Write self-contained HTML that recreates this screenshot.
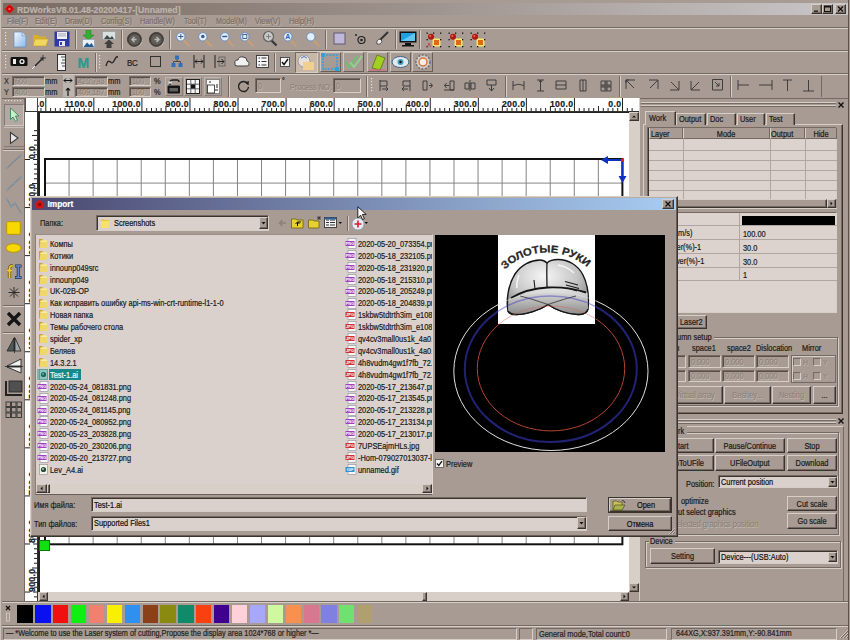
<!DOCTYPE html><html><head><meta charset="utf-8"><style>
html,body{margin:0;padding:0;width:850px;height:640px;overflow:hidden;background:#a89b93;font-family:"Liberation Sans", sans-serif;}
.a{position:absolute;}
.t{height:20px;line-height:20px;white-space:nowrap;-webkit-text-stroke:0.2px currentColor;}
</style></head><body>
<div class="a" style="left:0px;top:0px;width:1px;height:640px;background:#c9c0b8"></div>
<div class="a" style="left:848px;top:0px;width:1px;height:640px;background:#5c524c"></div>
<div class="a" style="left:3px;top:3px;width:845px;height:12px;background:linear-gradient(90deg,#786b63 0%,#9a8f89 45%,#c9c6c8 100%)"></div>
<svg class="a" style="left:4px;top:4px;" width="11" height="10" viewBox="0 0 11 10"><path d="M5.5 0.3 L10.5 5 L5.5 9.7 L0.5 5 Z" fill="#e01818"/><circle cx="5.5" cy="5" r="3" fill="#d00000"/><circle cx="5.5" cy="5" r="1.2" fill="#ff6060"/></svg>
<div class="a t" style="left:17px;top:-0.5px;font-size:8.7px;color:#bdb3ab;font-weight:bold;">RDWorksV8.01.48-20200417-[Unnamed]</div>
<div class="a" style="left:811px;top:4px;width:11px;height:10px;background:#a89b93;border-top:1px solid #d6cfc8;border-left:1px solid #d6cfc8;border-right:1px solid #3a332e;border-bottom:1px solid #3a332e;box-shadow:inset -1px -1px #756a63;box-sizing:border-box;"></div>
<div class="a" style="left:822px;top:4px;width:11px;height:10px;background:#a89b93;border-top:1px solid #d6cfc8;border-left:1px solid #d6cfc8;border-right:1px solid #3a332e;border-bottom:1px solid #3a332e;box-shadow:inset -1px -1px #756a63;box-sizing:border-box;"></div>
<div class="a" style="left:835px;top:4px;width:11px;height:10px;background:#a89b93;border-top:1px solid #d6cfc8;border-left:1px solid #d6cfc8;border-right:1px solid #3a332e;border-bottom:1px solid #3a332e;box-shadow:inset -1px -1px #756a63;box-sizing:border-box;"></div>
<svg class="a" style="left:811px;top:4px;" width="11" height="10" viewBox="0 0 11 10"><rect x="3" y="6.5" width="4" height="1.3" fill="#111"/></svg>
<svg class="a" style="left:822px;top:4px;" width="11" height="10" viewBox="0 0 11 10"><rect x="2.5" y="2" width="6" height="5.5" fill="none" stroke="#111" stroke-width="1"/><rect x="2.5" y="2" width="6" height="1.5" fill="#111"/></svg>
<svg class="a" style="left:835px;top:4px;" width="11" height="10" viewBox="0 0 11 10"><path d="M3 2.5 L8 7.5 M8 2.5 L3 7.5" stroke="#111" stroke-width="1.4"/></svg>
<div class="a t" style="left:7.4px;top:11.8px;font-size:8.18px;color:#7a6e66;transform:scaleX(0.893);transform-origin:0 50%;text-shadow:0.6px 0.6px 0 #c4bbb4">File(F)</div>
<div class="a t" style="left:35px;top:11.8px;font-size:8.18px;color:#7a6e66;transform:scaleX(0.893);transform-origin:0 50%;text-shadow:0.6px 0.6px 0 #c4bbb4">Edit(E)</div>
<div class="a t" style="left:64.6px;top:11.8px;font-size:8.18px;color:#7a6e66;transform:scaleX(0.893);transform-origin:0 50%;text-shadow:0.6px 0.6px 0 #c4bbb4">Draw(D)</div>
<div class="a t" style="left:100.6px;top:11.8px;font-size:8.18px;color:#7a6e66;transform:scaleX(0.893);transform-origin:0 50%;text-shadow:0.6px 0.6px 0 #c4bbb4">Config(S)</div>
<div class="a t" style="left:139.8px;top:11.8px;font-size:8.18px;color:#7a6e66;transform:scaleX(0.893);transform-origin:0 50%;text-shadow:0.6px 0.6px 0 #c4bbb4">Handle(W)</div>
<div class="a t" style="left:183.8px;top:11.8px;font-size:8.18px;color:#7a6e66;transform:scaleX(0.893);transform-origin:0 50%;text-shadow:0.6px 0.6px 0 #c4bbb4">Tool(T)</div>
<div class="a t" style="left:215.5px;top:11.8px;font-size:8.18px;color:#7a6e66;transform:scaleX(0.893);transform-origin:0 50%;text-shadow:0.6px 0.6px 0 #c4bbb4">Model(M)</div>
<div class="a t" style="left:254.7px;top:11.8px;font-size:8.18px;color:#7a6e66;transform:scaleX(0.893);transform-origin:0 50%;text-shadow:0.6px 0.6px 0 #c4bbb4">View(V)</div>
<div class="a t" style="left:288.6px;top:11.8px;font-size:8.18px;color:#7a6e66;transform:scaleX(0.893);transform-origin:0 50%;text-shadow:0.6px 0.6px 0 #c4bbb4">Help(H)</div>
<div class="a" style="left:2px;top:27px;width:846px;height:1px;background:#756a63"></div>
<div class="a" style="left:2px;top:28px;width:846px;height:1px;background:#d6cfc8"></div>
<div class="a" style="left:2px;top:50px;width:846px;height:1px;background:#756a63"></div>
<div class="a" style="left:2px;top:51px;width:846px;height:1px;background:#d6cfc8"></div>
<svg class="a" style="left:5px;top:32px;" width="2" height="16" viewBox="0 0 2 16"><rect x="0" y="0" width="1.2" height="1.2" fill="#e8e2dc"/><rect x="0" y="3" width="1.2" height="1.2" fill="#e8e2dc"/><rect x="0" y="6" width="1.2" height="1.2" fill="#e8e2dc"/><rect x="0" y="9" width="1.2" height="1.2" fill="#e8e2dc"/><rect x="0" y="12" width="1.2" height="1.2" fill="#e8e2dc"/></svg>
<div class="a" style="left:75px;top:30px;width:1px;height:19px;background:#756a63"></div>
<div class="a" style="left:76px;top:30px;width:1px;height:19px;background:#d6cfc8"></div>
<div class="a" style="left:121px;top:30px;width:1px;height:19px;background:#756a63"></div>
<div class="a" style="left:122px;top:30px;width:1px;height:19px;background:#d6cfc8"></div>
<div class="a" style="left:169px;top:30px;width:1px;height:19px;background:#756a63"></div>
<div class="a" style="left:170px;top:30px;width:1px;height:19px;background:#d6cfc8"></div>
<div class="a" style="left:325px;top:30px;width:1px;height:19px;background:#756a63"></div>
<div class="a" style="left:326px;top:30px;width:1px;height:19px;background:#d6cfc8"></div>
<div class="a" style="left:395px;top:30px;width:1px;height:19px;background:#756a63"></div>
<div class="a" style="left:396px;top:30px;width:1px;height:19px;background:#d6cfc8"></div>
<div class="a" style="left:419px;top:30px;width:1px;height:19px;background:#756a63"></div>
<div class="a" style="left:420px;top:30px;width:1px;height:19px;background:#d6cfc8"></div>
<svg class="a" style="left:13px;top:31px;" width="14" height="17" viewBox="0 0 14 17"><defs><linearGradient id="gd" x1="0" y1="0" x2="1" y2="1"><stop offset="0" stop-color="#f4f8ff"/><stop offset="1" stop-color="#8ab8e8"/></linearGradient></defs><path d="M1 1 H9 L13 5 V16 H1 Z" fill="url(#gd)" stroke="#6a90c0" stroke-width="0.8"/><path d="M9 1 V5 H13" fill="#c8dcf0" stroke="#6a90c0" stroke-width="0.6"/></svg>
<svg class="a" style="left:32px;top:32px;" width="17" height="15" viewBox="0 0 17 15"><path d="M1 3 H6 L7.5 4.5 H14 V14 H1 Z" fill="#d8b030"/><path d="M3 7 H16.5 L14 14 H1 Z" fill="#f0d860" stroke="#c09828" stroke-width="0.6"/></svg>
<svg class="a" style="left:54px;top:31px;" width="16" height="16" viewBox="0 0 16 16"><rect x="0.5" y="0.5" width="15" height="15" fill="#3038a8"/><rect x="3" y="1" width="10" height="7" fill="#f0f0f8"/><rect x="4" y="2.5" width="8" height="0.8" fill="#9090b0"/><rect x="4" y="4.5" width="8" height="0.8" fill="#9090b0"/><rect x="5" y="10" width="6" height="5" fill="#e8e8f0"/><rect x="6" y="11" width="2" height="3" fill="#3038a8"/></svg>
<svg class="a" style="left:82px;top:30px;" width="13" height="18" viewBox="0 0 13 18"><path d="M4 0 H9 V5 H12 L6.5 10 L1 5 H4 Z" fill="#30b030" stroke="#208020" stroke-width="0.5"/><rect x="0.5" y="9.5" width="12" height="8" fill="#e8f0f8" stroke="#8a9ab0" stroke-width="0.6"/><path d="M1.5 17 L5 12.5 L7.5 15 L9.5 13 L12 17 Z" fill="#2a5a90"/></svg>
<svg class="a" style="left:102px;top:31px;" width="14" height="17" viewBox="0 0 14 17"><rect x="0.5" y="0.5" width="13" height="8" fill="#d8e0e0" stroke="#8a9a9a" stroke-width="0.6"/><path d="M2 8 L5 4 L8 7 L10 5 L12 8 Z" fill="#404848"/><path d="M4.5 17 V13 H2 L7 8.5 L12 13 H9.5 V17 Z" fill="#404040"/></svg>
<svg class="a" style="left:127.0px;top:32px;" width="17" height="17" viewBox="0 0 17 17"><circle cx="8" cy="8" r="7.2" fill="#f0ece8"/><circle cx="7.5" cy="7.5" r="7" fill="#4a4542" stroke="#2a2520" stroke-width="0.8"/><circle cx="7.5" cy="7.5" r="5.3" fill="#625e5a"/><path d="M9.5 7.5 H5.5 M7.5 5 L5 7.5 L7.5 10" stroke="#b8b8b8" stroke-width="1.5" fill="none"/></svg>
<svg class="a" style="left:149.0px;top:32px;" width="17" height="17" viewBox="0 0 17 17"><circle cx="8" cy="8" r="7.2" fill="#f0ece8"/><circle cx="7.5" cy="7.5" r="7" fill="#4a4542" stroke="#2a2520" stroke-width="0.8"/><circle cx="7.5" cy="7.5" r="5.3" fill="#625e5a"/><path d="M5.5 7.5 H9.5 M7.5 5 L10 7.5 L7.5 10" stroke="#b8b8b8" stroke-width="1.5" fill="none"/></svg>
<svg class="a" style="left:176px;top:31px;" width="16" height="17" viewBox="0 0 16 17"><path d="M7 8.5 L13.5 15.5" stroke="#d0a070" stroke-width="2.2" opacity="0.75"/><circle cx="4.8" cy="5.8" r="4.2" fill="#e4eef8" stroke="#6088c0" stroke-width="0.9"/><g transform="translate(-1.7,-1)"><path d="M4 6.5 H9 M6.5 4 V9" stroke="#3a5a90" stroke-width="1"/></g></svg>
<svg class="a" style="left:197.7px;top:31px;" width="16" height="17" viewBox="0 0 16 17"><path d="M7 8.5 L13.5 15.5" stroke="#d0a070" stroke-width="2.2" opacity="0.75"/><circle cx="4.8" cy="5.8" r="4.2" fill="#e4eef8" stroke="#6088c0" stroke-width="0.9"/><g transform="translate(-1.7,-1)"><circle cx="6.5" cy="6.5" r="1.8" fill="#3a5a90"/></g></svg>
<svg class="a" style="left:219.7px;top:31px;" width="16" height="17" viewBox="0 0 16 17"><path d="M7 8.5 L13.5 15.5" stroke="#d0a070" stroke-width="2.2" opacity="0.75"/><circle cx="4.8" cy="5.8" r="4.2" fill="#e4eef8" stroke="#6088c0" stroke-width="0.9"/><g transform="translate(-1.7,-1)"><path d="M4 6.5 H9" stroke="#3a5a90" stroke-width="1.5"/></g></svg>
<svg class="a" style="left:240.4px;top:31px;" width="16" height="17" viewBox="0 0 16 17"><path d="M7 8.5 L13.5 15.5" stroke="#d0a070" stroke-width="2.2" opacity="0.75"/><circle cx="4.8" cy="5.8" r="4.2" fill="#e4eef8" stroke="#6088c0" stroke-width="0.9"/><g transform="translate(-1.7,-1)"><rect x="4.5" y="4.5" width="4" height="4" fill="none" stroke="#3a5a90" stroke-width="0.9"/></g></svg>
<svg class="a" style="left:262px;top:30px;" width="17" height="18" viewBox="0 0 17 18"><path d="M8 9 L14.5 15.5" stroke="#3a3a3a" stroke-width="2.4"/><circle cx="6.5" cy="6.5" r="5" fill="#c8c8c8" stroke="#606060" stroke-width="1.2"/><path d="M4 6.5 H9 M6.5 4 V9" stroke="#707070" stroke-width="0.8"/></svg>
<svg class="a" style="left:283px;top:31px;" width="16" height="17" viewBox="0 0 16 17"><path d="M7 8.5 L13.5 15.5" stroke="#d0a070" stroke-width="2.2" opacity="0.75"/><circle cx="4.8" cy="5.8" r="4.2" fill="#e4eef8" stroke="#6088c0" stroke-width="0.9"/><g transform="translate(-1.7,-1)"><text x="6.5" y="9" font-size="7" text-anchor="middle" fill="#2060c0" font-family="Liberation Sans" font-weight="bold">A</text></g></svg>
<svg class="a" style="left:306px;top:31px;" width="16" height="17" viewBox="0 0 16 17"><path d="M7 8.5 L13.5 15.5" stroke="#d0a070" stroke-width="2.2" opacity="0.75"/><circle cx="4.8" cy="5.8" r="4.2" fill="#e4eef8" stroke="#6088c0" stroke-width="0.9"/><g transform="translate(-1.7,-1)"></g></svg>
<svg class="a" style="left:333px;top:32px;" width="13" height="13" viewBox="0 0 13 13"><rect x="1" y="1" width="11" height="11" fill="#c0b8d8" stroke="#605870" stroke-width="1"/></svg>
<svg class="a" style="left:354px;top:32px;" width="14" height="14" viewBox="0 0 14 14"><circle cx="7.5" cy="8" r="3.5" fill="none" stroke="#222" stroke-width="1.2"/><circle cx="7.5" cy="8" r="1.3" fill="#222"/><circle cx="2" cy="3" r="1" fill="#222"/></svg>
<svg class="a" style="left:375px;top:31px;" width="15" height="15" viewBox="0 0 15 15"><path d="M13 1 L5 9" stroke="#333" stroke-width="2"/><path d="M2 13 Q1 9 5 8 L7 10 Q6 14 2 13 Z" fill="#eee" stroke="#333" stroke-width="0.8"/></svg>
<svg class="a" style="left:399px;top:31px;" width="18" height="16" viewBox="0 0 18 16"><rect x="0.5" y="0.5" width="17" height="11" fill="#111"/><rect x="2" y="2" width="14" height="8" fill="#20a0e0"/><path d="M2 10 L16 2 V10 Z" fill="#60c8f0"/><rect x="6" y="12" width="6" height="2" fill="#111"/><rect x="3" y="14" width="12" height="1.5" fill="#111"/></svg>
<svg class="a" style="left:425.5px;top:32px;" width="16" height="16" viewBox="0 0 16 16"><rect x="6.5" y="6.5" width="8" height="8" rx="1.5" fill="#f8e868"/><rect x="8" y="8" width="5" height="5" fill="#e06818"/><circle cx="5" cy="4.8" r="3" fill="#b01810"/><circle cx="4.3" cy="4" r="1" fill="#f07050"/><rect x="0.5" y="0.5" width="1.3" height="1.3" fill="#111"/><rect x="7" y="0.5" width="1.3" height="1.3" fill="#111"/><rect x="14" y="0.5" width="1.3" height="1.3" fill="#111"/><rect x="0.5" y="7" width="1.3" height="1.3" fill="#111"/><rect x="14" y="7" width="1.3" height="1.3" fill="#111"/><rect x="0.5" y="14" width="1.3" height="1.3" fill="#111"/><rect x="7" y="14" width="1.3" height="1.3" fill="#111"/><rect x="14" y="14" width="1.3" height="1.3" fill="#111"/><path d="M1.5 15 L3 11 L4.5 15" stroke="#d04040" stroke-width="0.9" fill="none"/></svg>
<svg class="a" style="left:447.5px;top:32px;" width="16" height="16" viewBox="0 0 16 16"><rect x="6.5" y="6.5" width="8" height="8" rx="1.5" fill="#f8e868"/><rect x="8" y="8" width="5" height="5" fill="#e06818"/><circle cx="5" cy="4.8" r="3" fill="#b01810"/><circle cx="4.3" cy="4" r="1" fill="#f07050"/><rect x="0.5" y="0.5" width="1.3" height="1.3" fill="#111"/><rect x="7" y="0.5" width="1.3" height="1.3" fill="#111"/><rect x="14" y="0.5" width="1.3" height="1.3" fill="#111"/><rect x="0.5" y="7" width="1.3" height="1.3" fill="#111"/><rect x="14" y="7" width="1.3" height="1.3" fill="#111"/><rect x="0.5" y="14" width="1.3" height="1.3" fill="#111"/><rect x="7" y="14" width="1.3" height="1.3" fill="#111"/><rect x="14" y="14" width="1.3" height="1.3" fill="#111"/></svg>
<svg class="a" style="left:469.5px;top:32px;" width="16" height="16" viewBox="0 0 16 16"><rect x="6.5" y="6.5" width="8" height="8" rx="1.5" fill="#f8e868"/><rect x="8" y="8" width="5" height="5" fill="#e06818"/><circle cx="5" cy="4.8" r="3" fill="#b01810"/><circle cx="4.3" cy="4" r="1" fill="#f07050"/><rect x="0.5" y="0.5" width="1.3" height="1.3" fill="#111"/><rect x="7" y="0.5" width="1.3" height="1.3" fill="#111"/><rect x="14" y="0.5" width="1.3" height="1.3" fill="#111"/><rect x="0.5" y="7" width="1.3" height="1.3" fill="#111"/><rect x="14" y="7" width="1.3" height="1.3" fill="#111"/><rect x="0.5" y="14" width="1.3" height="1.3" fill="#111"/><rect x="7" y="14" width="1.3" height="1.3" fill="#111"/><rect x="14" y="14" width="1.3" height="1.3" fill="#111"/></svg>
<div class="a" style="left:2px;top:73px;width:846px;height:1px;background:#756a63"></div>
<div class="a" style="left:2px;top:74px;width:846px;height:1px;background:#d6cfc8"></div>
<svg class="a" style="left:5px;top:55px;" width="2" height="16" viewBox="0 0 2 16"><rect x="0" y="0" width="1.2" height="1.2" fill="#e8e2dc"/><rect x="0" y="3" width="1.2" height="1.2" fill="#e8e2dc"/><rect x="0" y="6" width="1.2" height="1.2" fill="#e8e2dc"/><rect x="0" y="9" width="1.2" height="1.2" fill="#e8e2dc"/><rect x="0" y="12" width="1.2" height="1.2" fill="#e8e2dc"/></svg>
<div class="a" style="left:95px;top:53px;width:1px;height:19px;background:#756a63"></div>
<div class="a" style="left:96px;top:53px;width:1px;height:19px;background:#d6cfc8"></div>
<svg class="a" style="left:99px;top:55px;" width="2" height="16" viewBox="0 0 2 16"><rect x="0" y="0" width="1.2" height="1.2" fill="#e8e2dc"/><rect x="0" y="3" width="1.2" height="1.2" fill="#e8e2dc"/><rect x="0" y="6" width="1.2" height="1.2" fill="#e8e2dc"/><rect x="0" y="9" width="1.2" height="1.2" fill="#e8e2dc"/><rect x="0" y="12" width="1.2" height="1.2" fill="#e8e2dc"/></svg>
<div class="a" style="left:274px;top:53px;width:1px;height:19px;background:#756a63"></div>
<div class="a" style="left:275px;top:53px;width:1px;height:19px;background:#d6cfc8"></div>
<svg class="a" style="left:10px;top:56px;" width="18" height="11" viewBox="0 0 18 11"><rect x="0.5" y="1" width="17" height="9" rx="1.5" fill="#111"/><rect x="3" y="3" width="3" height="5" fill="#eee"/><circle cx="12" cy="5.5" r="2.6" fill="#eee"/><circle cx="12" cy="5.5" r="1.2" fill="#111"/></svg>
<svg class="a" style="left:31px;top:54px;" width="16" height="17" viewBox="0 0 16 17"><path d="M1 15 L12 4" stroke="#222" stroke-width="1.4"/><path d="M1 15 L4 12" stroke="#f0f0f0" stroke-width="1.2"/><path d="M12 1 V7 M9 4 H15" stroke="#222" stroke-width="0.8"/></svg>
<svg class="a" style="left:57px;top:54px;" width="9" height="17" viewBox="0 0 9 17"><rect x="0.5" y="0.5" width="8" height="16" fill="#f4f4f4" stroke="#222" stroke-width="0.9"/><path d="M4 3 H8 M5 6 H8 M4 9 H8 M5 12 H8" stroke="#222" stroke-width="0.8"/></svg>
<div class="a t" style="left:77.5px;top:52.5px;font-size:14px;color:#2a9a90;font-weight:bold;">M</div>
<svg class="a" style="left:105px;top:55px;" width="14" height="12" viewBox="0 0 14 12"><path d="M1 11 C4 0 6 12 9 6 S12 2 13 2" fill="none" stroke="#222" stroke-width="1.3"/></svg>
<div class="a t" style="left:127px;top:52.8px;font-size:8.96px;color:#222;transform:scaleX(0.893);transform-origin:0 50%;letter-spacing:-0.5px">BC</div>
<svg class="a" style="left:150px;top:56px;" width="11" height="11" viewBox="0 0 11 11"><rect x="0.5" y="0.5" width="10" height="10" fill="none" stroke="#333" stroke-width="1"/></svg>
<svg class="a" style="left:171px;top:55px;" width="12" height="13" viewBox="0 0 12 13"><rect x="4" y="0.5" width="4" height="4" fill="#3070c0"/><rect x="0.5" y="8" width="4" height="4" fill="#3070c0"/><rect x="7.5" y="8" width="4" height="4" fill="#3070c0"/><path d="M6 4.5 V6.5 H2.5 V8 M6 6.5 H9.5 V8" fill="none" stroke="#333" stroke-width="0.8"/></svg>
<svg class="a" style="left:193px;top:55px;" width="12" height="13" viewBox="0 0 12 13"><path d="M1 0 V13 M11 0 V13 M2 6.5 H10 M2 6.5 L4 4.5 M2 6.5 L4 8.5 M10 6.5 L8 4.5 M10 6.5 L8 8.5" stroke="#222" stroke-width="1"/></svg>
<svg class="a" style="left:214px;top:55px;" width="12" height="13" viewBox="0 0 12 13"><path d="M1 0 V13 M3 6.5 H10 L7.5 4 M10 6.5 L7.5 9" stroke="#222" stroke-width="1" fill="none"/><rect x="5" y="2" width="6" height="9" fill="none" stroke="#555" stroke-width="0.7"/></svg>
<svg class="a" style="left:234px;top:55px;" width="16" height="13" viewBox="0 0 16 13"><path d="M3 11 Q0 11 1 8 Q0 5 4 5 Q5 1 9 2 Q13 2 13 6 Q16 7 15 10 Q14 11 12 11 Z" fill="#f0f0f0" stroke="#333" stroke-width="0.9"/></svg>
<svg class="a" style="left:256px;top:55px;" width="13" height="13" viewBox="0 0 13 13"><rect x="0.5" y="0.5" width="12" height="12" fill="#f4f4f4" stroke="#333" stroke-width="0.9"/><path d="M2.5 3 H4 M2.5 6.5 H4 M2.5 10 H4 M5.5 3 H10.5 M5.5 6.5 H10.5 M5.5 10 H10.5" stroke="#333" stroke-width="1"/></svg>
<svg class="a" style="left:280px;top:57px;" width="10" height="10" viewBox="0 0 10 10"><rect x="0.5" y="0.5" width="9" height="9" fill="#f4f4f4" stroke="#333" stroke-width="0.8"/><path d="M2 5 L4 7.5 L8 2" stroke="#111" stroke-width="1.4" fill="none"/></svg>
<div class="a" style="left:295px;top:52px;width:23px;height:21px;background:#c8b8a8;border-top:1px solid #756a63;border-left:1px solid #756a63;border-right:1px solid #d6cfc8;border-bottom:1px solid #d6cfc8;box-shadow:inset 1px 1px #3a332e;box-sizing:border-box;box-shadow:none"></div>
<svg class="a" style="left:297px;top:54px;" width="19" height="17" viewBox="0 0 19 17"><circle cx="7" cy="7" r="6" fill="#e8e0d8" stroke="#8090a0" stroke-width="0.8"/><rect x="6" y="8" width="11" height="8" fill="#f0d090"/><path d="M4 4 Q7 1 10 4" stroke="#4a7ac0" fill="none"/></svg>
<div class="a" style="left:320px;top:52px;width:21px;height:20px;background:#a89b93;border-top:1px solid #d6cfc8;border-left:1px solid #d6cfc8;border-right:1px solid #3a332e;border-bottom:1px solid #3a332e;box-shadow:inset -1px -1px #756a63;box-sizing:border-box;border-color:#cfc6be #6a5f58 #6a5f58 #cfc6be;box-shadow:none"></div>
<svg class="a" style="left:321px;top:53px;" width="19" height="18" viewBox="0 0 19 18"><rect x="2" y="2" width="14" height="14" fill="none" stroke="#30a0e0" stroke-width="1.6" stroke-dasharray="2 1.2"/><rect x="0" y="0" width="4" height="4" fill="#30a0e0"/><rect x="14" y="14" width="4" height="4" fill="#30a0e0"/></svg>
<div class="a" style="left:343px;top:52px;width:21px;height:20px;background:#a89b93;border-top:1px solid #d6cfc8;border-left:1px solid #d6cfc8;border-right:1px solid #3a332e;border-bottom:1px solid #3a332e;box-shadow:inset -1px -1px #756a63;box-sizing:border-box;border-color:#cfc6be #6a5f58 #6a5f58 #cfc6be;box-shadow:none"></div>
<svg class="a" style="left:344px;top:53px;" width="19" height="18" viewBox="0 0 19 18"><path d="M1 9 L5 14 L13 3" stroke="#70c070" stroke-width="2" fill="none"/><path d="M6 9 L10 14 L18 3" stroke="#90d090" stroke-width="2" fill="none"/></svg>
<div class="a" style="left:367px;top:52px;width:21px;height:20px;background:#a89b93;border-top:1px solid #d6cfc8;border-left:1px solid #d6cfc8;border-right:1px solid #3a332e;border-bottom:1px solid #3a332e;box-shadow:inset -1px -1px #756a63;box-sizing:border-box;border-color:#cfc6be #6a5f58 #6a5f58 #cfc6be;box-shadow:none"></div>
<svg class="a" style="left:368px;top:53px;" width="19" height="18" viewBox="0 0 19 18"><path d="M4 15 L9 2 L17 5 L12 17 Z" fill="#a0d020" stroke="#607010" stroke-width="0.8"/><path d="M1 17 H18" stroke="#e06080" stroke-width="1"/></svg>
<div class="a" style="left:390px;top:52px;width:21px;height:20px;background:#a89b93;border-top:1px solid #d6cfc8;border-left:1px solid #d6cfc8;border-right:1px solid #3a332e;border-bottom:1px solid #3a332e;box-shadow:inset -1px -1px #756a63;box-sizing:border-box;border-color:#cfc6be #6a5f58 #6a5f58 #cfc6be;box-shadow:none"></div>
<svg class="a" style="left:391px;top:53px;" width="19" height="18" viewBox="0 0 19 18"><ellipse cx="9.5" cy="9" rx="8.5" ry="5.5" fill="#e0e8f0" stroke="#406080" stroke-width="1"/><circle cx="9.5" cy="9" r="3" fill="#40a0c0"/><circle cx="9.5" cy="9" r="1.2" fill="#111"/></svg>
<div class="a" style="left:412px;top:52px;width:21px;height:20px;background:#a89b93;border-top:1px solid #d6cfc8;border-left:1px solid #d6cfc8;border-right:1px solid #3a332e;border-bottom:1px solid #3a332e;box-shadow:inset -1px -1px #756a63;box-sizing:border-box;border-color:#cfc6be #6a5f58 #6a5f58 #cfc6be;box-shadow:none"></div>
<svg class="a" style="left:413px;top:53px;" width="19" height="18" viewBox="0 0 19 18"><circle cx="10" cy="9" r="7" fill="#d0d0d0" stroke="#707070" stroke-width="1.5" stroke-dasharray="2 1.5"/><circle cx="10" cy="9" r="4" fill="#f0f0f0" stroke="#e07030" stroke-width="1.4"/></svg>
<div class="a" style="left:2px;top:98px;width:846px;height:1px;background:#756a63"></div>
<div class="a t" style="left:4px;top:71.3px;font-size:8.29px;color:#333;transform:scaleX(0.893);transform-origin:0 50%;">X</div>
<div class="a t" style="left:4px;top:82.3px;font-size:8.29px;color:#333;transform:scaleX(0.893);transform-origin:0 50%;">Y</div>
<div class="a" style="left:12px;top:76px;width:33px;height:10px;background:#a89b93;border-top:1px solid #756a63;border-left:1px solid #756a63;border-right:1px solid #d6cfc8;border-bottom:1px solid #d6cfc8;box-shadow:inset 1px 1px #3a332e;box-sizing:border-box;box-shadow:inset 1px 1px #5a4f48"></div>
<div class="a t" style="left:15px;top:71.3px;font-size:8.29px;color:#8e837b;transform:scaleX(0.893);transform-origin:0 50%;text-shadow:0.6px 0.6px #c8c0b8">600</div>
<div class="a" style="left:12px;top:87px;width:33px;height:10px;background:#a89b93;border-top:1px solid #756a63;border-left:1px solid #756a63;border-right:1px solid #d6cfc8;border-bottom:1px solid #d6cfc8;box-shadow:inset 1px 1px #3a332e;box-sizing:border-box;box-shadow:inset 1px 1px #5a4f48"></div>
<div class="a t" style="left:15px;top:82.3px;font-size:8.29px;color:#8e837b;transform:scaleX(0.893);transform-origin:0 50%;text-shadow:0.6px 0.6px #c8c0b8">400</div>
<div class="a t" style="left:44.8px;top:71.3px;font-size:8.29px;color:#1a1a1a;transform:scaleX(0.893);transform-origin:0 50%;">mm</div>
<div class="a t" style="left:44.8px;top:82.3px;font-size:8.29px;color:#1a1a1a;transform:scaleX(0.893);transform-origin:0 50%;">mm</div>
<div class="a" style="left:62.5px;top:75px;width:11px;height:22px;background:#bcb4ae"></div>
<svg class="a" style="left:63px;top:76px;" width="10" height="20" viewBox="0 0 10 20"><path d="M1 4.5 H9 M1 4.5 L3 2.5 M1 4.5 L3 6.5 M9 4.5 L7 2.5 M9 4.5 L7 6.5" stroke="#111" stroke-width="1"/><path d="M5 12 V20 M5 12 L3 14.5 M5 12 L7 14.5" stroke="#111" stroke-width="1.2" fill="none"/></svg>
<div class="a" style="left:75px;top:76px;width:33px;height:10px;background:#a89b93;border-top:1px solid #756a63;border-left:1px solid #756a63;border-right:1px solid #d6cfc8;border-bottom:1px solid #d6cfc8;box-shadow:inset 1px 1px #3a332e;box-sizing:border-box;box-shadow:inset 1px 1px #5a4f48"></div>
<div class="a t" style="left:78px;top:71.3px;font-size:8.29px;color:#8e837b;transform:scaleX(0.893);transform-origin:0 50%;text-shadow:0.6px 0.6px #c8c0b8">420.793</div>
<div class="a" style="left:75px;top:87px;width:33px;height:10px;background:#a89b93;border-top:1px solid #756a63;border-left:1px solid #756a63;border-right:1px solid #d6cfc8;border-bottom:1px solid #d6cfc8;box-shadow:inset 1px 1px #3a332e;box-sizing:border-box;box-shadow:inset 1px 1px #5a4f48"></div>
<div class="a t" style="left:78px;top:82.3px;font-size:8.29px;color:#8e837b;transform:scaleX(0.893);transform-origin:0 50%;text-shadow:0.6px 0.6px #c8c0b8">409.187</div>
<div class="a t" style="left:108px;top:71.3px;font-size:8.29px;color:#1a1a1a;transform:scaleX(0.893);transform-origin:0 50%;">mm</div>
<div class="a t" style="left:108px;top:82.3px;font-size:8.29px;color:#1a1a1a;transform:scaleX(0.893);transform-origin:0 50%;">mm</div>
<div class="a" style="left:129px;top:76px;width:22px;height:10px;background:#a89b93;border-top:1px solid #756a63;border-left:1px solid #756a63;border-right:1px solid #d6cfc8;border-bottom:1px solid #d6cfc8;box-shadow:inset 1px 1px #3a332e;box-sizing:border-box;box-shadow:inset 1px 1px #5a4f48"></div>
<div class="a t" style="left:132px;top:71.3px;font-size:8.29px;color:#8e837b;transform:scaleX(0.893);transform-origin:0 50%;text-shadow:0.6px 0.6px #c8c0b8">100</div>
<div class="a" style="left:129px;top:87px;width:22px;height:10px;background:#a89b93;border-top:1px solid #756a63;border-left:1px solid #756a63;border-right:1px solid #d6cfc8;border-bottom:1px solid #d6cfc8;box-shadow:inset 1px 1px #3a332e;box-sizing:border-box;box-shadow:inset 1px 1px #5a4f48"></div>
<div class="a t" style="left:132px;top:82.3px;font-size:8.29px;color:#8e837b;transform:scaleX(0.893);transform-origin:0 50%;text-shadow:0.6px 0.6px #c8c0b8">100</div>
<div class="a t" style="left:154px;top:71.3px;font-size:8.29px;color:#222;transform:scaleX(0.893);transform-origin:0 50%;">%</div>
<div class="a t" style="left:154px;top:82.3px;font-size:8.29px;color:#222;transform:scaleX(0.893);transform-origin:0 50%;">%</div>
<div class="a" style="left:165px;top:77px;width:18px;height:19px;background:#a89b93;border-top:1px solid #d6cfc8;border-left:1px solid #d6cfc8;border-right:1px solid #3a332e;border-bottom:1px solid #3a332e;box-shadow:inset -1px -1px #756a63;box-sizing:border-box;border-color:#c0b6ae #8a7f78 #8a7f78 #c0b6ae;box-shadow:none"></div>
<div class="a" style="left:184px;top:77px;width:18px;height:19px;background:#a89b93;border-top:1px solid #d6cfc8;border-left:1px solid #d6cfc8;border-right:1px solid #3a332e;border-bottom:1px solid #3a332e;box-shadow:inset -1px -1px #756a63;box-sizing:border-box;border-color:#c0b6ae #8a7f78 #8a7f78 #c0b6ae;box-shadow:none"></div>
<div class="a" style="left:204px;top:77px;width:18px;height:19px;background:#a89b93;border-top:1px solid #d6cfc8;border-left:1px solid #d6cfc8;border-right:1px solid #3a332e;border-bottom:1px solid #3a332e;box-shadow:inset -1px -1px #756a63;box-sizing:border-box;border-color:#c0b6ae #8a7f78 #8a7f78 #c0b6ae;box-shadow:none"></div>
<svg class="a" style="left:167px;top:79px;" width="14" height="15" viewBox="0 0 14 15"><path d="M3 6 V3 Q3 1 6 1 H10 Q12 1 12 3" fill="none" stroke="#222" stroke-width="1.4"/><rect x="1.5" y="2.5" width="3" height="2" fill="#e8e8e8"/><rect x="0.5" y="6.5" width="12.5" height="8" rx="1" fill="#151515"/><rect x="2.5" y="9" width="8.5" height="3.5" fill="#606060"/></svg>
<svg class="a" style="left:186px;top:79px;" width="14" height="15" viewBox="0 0 14 15"><rect x="0.5" y="0.5" width="13" height="14" fill="#f8f8f8" stroke="#222" stroke-width="1"/><path d="M4.8 1 V14 M9.2 1 V14 M1 5.2 H13 M1 9.8 H13" stroke="#555" stroke-width="0.9"/><rect x="5" y="5.5" width="4" height="4" fill="#111"/></svg>
<svg class="a" style="left:206px;top:79px;" width="14" height="15" viewBox="0 0 14 15"><rect x="0.5" y="0.5" width="13" height="14" fill="#f8f8f8" stroke="#222" stroke-width="0.8" stroke-dasharray="1 1"/><rect x="1.5" y="6" width="7" height="8" fill="#fff" stroke="#222" stroke-width="0.8"/><path d="M3 3 H5 M11 5 V9 M9 11 H12" stroke="#222" stroke-width="1"/></svg>
<div class="a" style="left:228px;top:76px;width:1px;height:21px;background:#756a63"></div>
<div class="a" style="left:229px;top:76px;width:1px;height:21px;background:#d6cfc8"></div>
<svg class="a" style="left:237px;top:79px;" width="13" height="14" viewBox="0 0 13 14"><path d="M10.5 4.5 A5 5 0 1 0 11.5 8" fill="none" stroke="#222" stroke-width="1.4"/><path d="M8 3.5 L12 2 L11.5 6.5 Z" fill="#222"/></svg>
<div class="a" style="left:255px;top:78px;width:26px;height:15px;background:#a89b93;border-top:1px solid #756a63;border-left:1px solid #756a63;border-right:1px solid #d6cfc8;border-bottom:1px solid #d6cfc8;box-shadow:inset 1px 1px #3a332e;box-sizing:border-box;box-shadow:inset 1px 1px #5a4f48"></div>
<div class="a t" style="left:258px;top:75.8px;font-size:8.29px;color:#8e837b;transform:scaleX(0.893);transform-origin:0 50%;text-shadow:0.6px 0.6px #c8c0b8">0</div>
<div class="a t" style="left:282px;top:71.3px;font-size:7.84px;color:#222;transform:scaleX(0.893);transform-origin:0 50%;">°</div>
<div class="a t" style="left:290px;top:77.3px;font-size:8.29px;color:#8e837b;transform:scaleX(0.893);transform-origin:0 50%;text-shadow:0.6px 0.6px #c8c0b8">Process NO:</div>
<div class="a" style="left:333px;top:78px;width:28px;height:15px;background:#a89b93;border-top:1px solid #756a63;border-left:1px solid #756a63;border-right:1px solid #d6cfc8;border-bottom:1px solid #d6cfc8;box-shadow:inset 1px 1px #3a332e;box-sizing:border-box;box-shadow:inset 1px 1px #5a4f48"></div>
<div class="a t" style="left:336px;top:75.8px;font-size:8.29px;color:#8e837b;transform:scaleX(0.893);transform-origin:0 50%;text-shadow:0.6px 0.6px #c8c0b8">0</div>
<div class="a" style="left:366px;top:76px;width:1px;height:21px;background:#756a63"></div>
<div class="a" style="left:367px;top:76px;width:1px;height:21px;background:#d6cfc8"></div>
<svg class="a" style="left:371px;top:78px;" width="2" height="17" viewBox="0 0 2 17"><rect x="0" y="0" width="1.2" height="1.2" fill="#e8e2dc"/><rect x="0" y="3" width="1.2" height="1.2" fill="#e8e2dc"/><rect x="0" y="6" width="1.2" height="1.2" fill="#e8e2dc"/><rect x="0" y="9" width="1.2" height="1.2" fill="#e8e2dc"/><rect x="0" y="12" width="1.2" height="1.2" fill="#e8e2dc"/></svg>
<svg class="a" style="left:379px;top:79px;" width="11" height="13" viewBox="0 0 11 13"><path d="M1 1 V12 M1 2 H8 V7 H1 M3 10 H9 M7 8 L9 10 L7 12" stroke="#3a3a3a" stroke-width="0.95" fill="none"/></svg>
<svg class="a" style="left:401px;top:79px;" width="10" height="13" viewBox="0 0 10 13"><path d="M9 1 V12 M9 2 H2 V7 H9 M7 10 H1 M3 8 L1 10 L3 12" stroke="#3a3a3a" stroke-width="0.95" fill="none"/></svg>
<svg class="a" style="left:422px;top:80px;" width="11" height="11" viewBox="0 0 11 11"><path d="M1 1 H5 V10 H1 Z M7 5.5 H10 M8.5 3 L10.5 5.5 L8.5 8" stroke="#3a3a3a" stroke-width="0.95" fill="none"/></svg>
<svg class="a" style="left:444px;top:80px;" width="11" height="11" viewBox="0 0 11 11"><path d="M6 1 H10 V10 H6 Z M1 5.5 H5 M2.5 3 L0.5 5.5 L2.5 8 M0 10 H10" stroke="#3a3a3a" stroke-width="0.95" fill="none"/></svg>
<svg class="a" style="left:464px;top:80px;" width="12" height="11" viewBox="0 0 12 11"><path d="M1 3 H5 V9 H1 Z M7 3 H11 V9 H7 Z M6 0 V11" stroke="#3a3a3a" stroke-width="0.95" fill="none"/></svg>
<svg class="a" style="left:486px;top:79px;" width="11" height="13" viewBox="0 0 11 13"><path d="M1 1 H10 V6 H1 Z M5.5 6 V12 M3 9 L5.5 12 L8 9" stroke="#3a3a3a" stroke-width="0.95" fill="none"/></svg>
<div class="a" style="left:505px;top:76px;width:1px;height:21px;background:#756a63"></div>
<div class="a" style="left:506px;top:76px;width:1px;height:21px;background:#d6cfc8"></div>
<svg class="a" style="left:512px;top:80px;" width="13" height="11" viewBox="0 0 13 11"><path d="M1 1 V10 M12 1 V10 M1 5.5 Q6.5 3 12 5.5" stroke="#3a3a3a" stroke-width="0.95" fill="none"/></svg>
<svg class="a" style="left:536px;top:79px;" width="9" height="13" viewBox="0 0 9 13"><path d="M1 1 H8 M1 12 H8 M4.5 1 V12 M3 3 L4.5 1 L6 3" stroke="#3a3a3a" stroke-width="0.95" fill="none"/></svg>
<svg class="a" style="left:555px;top:80px;" width="12" height="10" viewBox="0 0 12 10"><path d="M1 1 H11 V9 H1 Z M1 5 H11" stroke="#3a3a3a" stroke-width="0.95" fill="none"/></svg>
<svg class="a" style="left:579px;top:79px;" width="8" height="13" viewBox="0 0 8 13"><path d="M1 1 H7 V12 H1 Z M4 1 V12" stroke="#3a3a3a" stroke-width="0.95" fill="none"/></svg>
<svg class="a" style="left:599.5px;top:79.5px;" width="12" height="12" viewBox="0 0 12 12"><path d="M1 1 H5 V5 H1 Z M7 1 H11 V5 H7 Z M1 7 H5 V11 H1 Z M7 7 H11 V11 H7 Z M6 0 V12 M0 6 H12" stroke="#3a3a3a" stroke-width="0.9" fill="none"/></svg>
<div class="a" style="left:619px;top:76px;width:1px;height:21px;background:#756a63"></div>
<div class="a" style="left:620px;top:76px;width:1px;height:21px;background:#d6cfc8"></div>
<svg class="a" style="left:625px;top:79px;" width="12" height="12" viewBox="0 0 12 12"><path d="M1 1 H10 M1 1 V10 M1 1 L9 9 M1 1 L4 1 M1 1 V4" stroke="#3a3a3a" stroke-width="0.95" fill="none"/></svg>
<svg class="a" style="left:647px;top:79px;" width="12" height="12" viewBox="0 0 12 12"><path d="M11 1 H2 M11 1 V10 M11 1 L3 9" stroke="#3a3a3a" stroke-width="0.95" fill="none"/></svg>
<svg class="a" style="left:668px;top:79px;" width="12" height="12" viewBox="0 0 12 12"><path d="M11 11 H2 M11 11 V2 M11 11 L3 3" stroke="#3a3a3a" stroke-width="0.95" fill="none"/></svg>
<svg class="a" style="left:690px;top:79px;" width="12" height="12" viewBox="0 0 12 12"><path d="M1 11 H10 M1 11 V2 M1 11 L9 3" stroke="#3a3a3a" stroke-width="0.95" fill="none"/></svg>
<svg class="a" style="left:712px;top:79px;" width="11" height="12" viewBox="0 0 11 12"><path d="M0.5 0.5 H10.5 V11 H0.5 Z M3 3 L7 7 M7 4 V7 H4" stroke="#3a3a3a" stroke-width="0.95" fill="none"/></svg>
<div class="a" style="left:730px;top:76px;width:1px;height:21px;background:#756a63"></div>
<div class="a" style="left:731px;top:76px;width:1px;height:21px;background:#d6cfc8"></div>
<svg class="a" style="left:737px;top:79px;" width="13" height="12" viewBox="0 0 13 12"><path d="M1 1 V11 M1 6 H12" stroke="#3a3a3a" stroke-width="0.95" fill="none"/></svg>
<svg class="a" style="left:758px;top:79px;" width="15" height="12" viewBox="0 0 15 12"><path d="M14 1 V11 M1 6 H14" stroke="#3a3a3a" stroke-width="0.95" fill="none"/></svg>
<svg class="a" style="left:782px;top:79px;" width="11" height="13" viewBox="0 0 11 13"><path d="M1 1 H10 M5.5 1 V12" stroke="#3a3a3a" stroke-width="0.95" fill="none"/></svg>
<svg class="a" style="left:802px;top:79px;" width="13" height="13" viewBox="0 0 13 13"><path d="M1 12 H12 M6.5 1 V12" stroke="#3a3a3a" stroke-width="0.95" fill="none"/></svg>
<div class="a" style="left:821px;top:76px;width:1px;height:21px;background:#756a63"></div>
<div class="a" style="left:24px;top:98px;width:1px;height:503px;background:#756a63"></div>
<div class="a" style="left:25px;top:98px;width:614px;height:14px;background:#fff"></div>
<div class="a" style="left:25px;top:98px;width:13px;height:14px;background:#fafafa;border-right:1px solid #444;border-left:1px solid #555;box-sizing:border-box"></div>
<div class="a" style="left:25px;top:111px;width:614px;height:1px;background:#333"></div>
<svg class="a" style="left:38px;top:98px;" width="601" height="13" viewBox="0 0 601 13"><rect x="593.61" y="10" width="1" height="3" fill="#222"/><rect x="588.81" y="10" width="1" height="3" fill="#222"/><rect x="584.00" y="0" width="1" height="13" fill="#222"/><rect x="579.19" y="10" width="1" height="3" fill="#222"/><rect x="574.39" y="10" width="1" height="3" fill="#222"/><rect x="569.58" y="10" width="1" height="3" fill="#222"/><rect x="564.78" y="10" width="1" height="3" fill="#222"/><rect x="559.97" y="8" width="1" height="5" fill="#222"/><rect x="555.16" y="10" width="1" height="3" fill="#222"/><rect x="550.36" y="10" width="1" height="3" fill="#222"/><rect x="545.55" y="10" width="1" height="3" fill="#222"/><rect x="540.75" y="10" width="1" height="3" fill="#222"/><rect x="535.94" y="0" width="1" height="13" fill="#222"/><rect x="531.13" y="10" width="1" height="3" fill="#222"/><rect x="526.33" y="10" width="1" height="3" fill="#222"/><rect x="521.52" y="10" width="1" height="3" fill="#222"/><rect x="516.72" y="10" width="1" height="3" fill="#222"/><rect x="511.91" y="8" width="1" height="5" fill="#222"/><rect x="507.10" y="10" width="1" height="3" fill="#222"/><rect x="502.30" y="10" width="1" height="3" fill="#222"/><rect x="497.49" y="10" width="1" height="3" fill="#222"/><rect x="492.69" y="10" width="1" height="3" fill="#222"/><rect x="487.88" y="0" width="1" height="13" fill="#222"/><rect x="483.07" y="10" width="1" height="3" fill="#222"/><rect x="478.27" y="10" width="1" height="3" fill="#222"/><rect x="473.46" y="10" width="1" height="3" fill="#222"/><rect x="468.66" y="10" width="1" height="3" fill="#222"/><rect x="463.85" y="8" width="1" height="5" fill="#222"/><rect x="459.04" y="10" width="1" height="3" fill="#222"/><rect x="454.24" y="10" width="1" height="3" fill="#222"/><rect x="449.43" y="10" width="1" height="3" fill="#222"/><rect x="444.63" y="10" width="1" height="3" fill="#222"/><rect x="439.82" y="0" width="1" height="13" fill="#222"/><rect x="435.01" y="10" width="1" height="3" fill="#222"/><rect x="430.21" y="10" width="1" height="3" fill="#222"/><rect x="425.40" y="10" width="1" height="3" fill="#222"/><rect x="420.60" y="10" width="1" height="3" fill="#222"/><rect x="415.79" y="8" width="1" height="5" fill="#222"/><rect x="410.98" y="10" width="1" height="3" fill="#222"/><rect x="406.18" y="10" width="1" height="3" fill="#222"/><rect x="401.37" y="10" width="1" height="3" fill="#222"/><rect x="396.57" y="10" width="1" height="3" fill="#222"/><rect x="391.76" y="0" width="1" height="13" fill="#222"/><rect x="386.95" y="10" width="1" height="3" fill="#222"/><rect x="382.15" y="10" width="1" height="3" fill="#222"/><rect x="377.34" y="10" width="1" height="3" fill="#222"/><rect x="372.54" y="10" width="1" height="3" fill="#222"/><rect x="367.73" y="8" width="1" height="5" fill="#222"/><rect x="362.92" y="10" width="1" height="3" fill="#222"/><rect x="358.12" y="10" width="1" height="3" fill="#222"/><rect x="353.31" y="10" width="1" height="3" fill="#222"/><rect x="348.51" y="10" width="1" height="3" fill="#222"/><rect x="343.70" y="0" width="1" height="13" fill="#222"/><rect x="338.89" y="10" width="1" height="3" fill="#222"/><rect x="334.09" y="10" width="1" height="3" fill="#222"/><rect x="329.28" y="10" width="1" height="3" fill="#222"/><rect x="324.48" y="10" width="1" height="3" fill="#222"/><rect x="319.67" y="8" width="1" height="5" fill="#222"/><rect x="314.86" y="10" width="1" height="3" fill="#222"/><rect x="310.06" y="10" width="1" height="3" fill="#222"/><rect x="305.25" y="10" width="1" height="3" fill="#222"/><rect x="300.45" y="10" width="1" height="3" fill="#222"/><rect x="295.64" y="0" width="1" height="13" fill="#222"/><rect x="290.83" y="10" width="1" height="3" fill="#222"/><rect x="286.03" y="10" width="1" height="3" fill="#222"/><rect x="281.22" y="10" width="1" height="3" fill="#222"/><rect x="276.42" y="10" width="1" height="3" fill="#222"/><rect x="271.61" y="8" width="1" height="5" fill="#222"/><rect x="266.80" y="10" width="1" height="3" fill="#222"/><rect x="262.00" y="10" width="1" height="3" fill="#222"/><rect x="257.19" y="10" width="1" height="3" fill="#222"/><rect x="252.39" y="10" width="1" height="3" fill="#222"/><rect x="247.58" y="0" width="1" height="13" fill="#222"/><rect x="242.77" y="10" width="1" height="3" fill="#222"/><rect x="237.97" y="10" width="1" height="3" fill="#222"/><rect x="233.16" y="10" width="1" height="3" fill="#222"/><rect x="228.36" y="10" width="1" height="3" fill="#222"/><rect x="223.55" y="8" width="1" height="5" fill="#222"/><rect x="218.74" y="10" width="1" height="3" fill="#222"/><rect x="213.94" y="10" width="1" height="3" fill="#222"/><rect x="209.13" y="10" width="1" height="3" fill="#222"/><rect x="204.33" y="10" width="1" height="3" fill="#222"/><rect x="199.52" y="0" width="1" height="13" fill="#222"/><rect x="194.71" y="10" width="1" height="3" fill="#222"/><rect x="189.91" y="10" width="1" height="3" fill="#222"/><rect x="185.10" y="10" width="1" height="3" fill="#222"/><rect x="180.30" y="10" width="1" height="3" fill="#222"/><rect x="175.49" y="8" width="1" height="5" fill="#222"/><rect x="170.68" y="10" width="1" height="3" fill="#222"/><rect x="165.88" y="10" width="1" height="3" fill="#222"/><rect x="161.07" y="10" width="1" height="3" fill="#222"/><rect x="156.27" y="10" width="1" height="3" fill="#222"/><rect x="151.46" y="0" width="1" height="13" fill="#222"/><rect x="146.65" y="10" width="1" height="3" fill="#222"/><rect x="141.85" y="10" width="1" height="3" fill="#222"/><rect x="137.04" y="10" width="1" height="3" fill="#222"/><rect x="132.24" y="10" width="1" height="3" fill="#222"/><rect x="127.43" y="8" width="1" height="5" fill="#222"/><rect x="122.62" y="10" width="1" height="3" fill="#222"/><rect x="117.82" y="10" width="1" height="3" fill="#222"/><rect x="113.01" y="10" width="1" height="3" fill="#222"/><rect x="108.21" y="10" width="1" height="3" fill="#222"/><rect x="103.40" y="0" width="1" height="13" fill="#222"/><rect x="98.59" y="10" width="1" height="3" fill="#222"/><rect x="93.79" y="10" width="1" height="3" fill="#222"/><rect x="88.98" y="10" width="1" height="3" fill="#222"/><rect x="84.18" y="10" width="1" height="3" fill="#222"/><rect x="79.37" y="8" width="1" height="5" fill="#222"/><rect x="74.56" y="10" width="1" height="3" fill="#222"/><rect x="69.76" y="10" width="1" height="3" fill="#222"/><rect x="64.95" y="10" width="1" height="3" fill="#222"/><rect x="60.15" y="10" width="1" height="3" fill="#222"/><rect x="55.34" y="0" width="1" height="13" fill="#222"/><rect x="50.53" y="10" width="1" height="3" fill="#222"/><rect x="45.73" y="10" width="1" height="3" fill="#222"/><rect x="40.92" y="10" width="1" height="3" fill="#222"/><rect x="36.12" y="10" width="1" height="3" fill="#222"/><rect x="31.31" y="8" width="1" height="5" fill="#222"/><rect x="26.50" y="10" width="1" height="3" fill="#222"/><rect x="21.70" y="10" width="1" height="3" fill="#222"/><rect x="16.89" y="10" width="1" height="3" fill="#222"/><rect x="12.09" y="10" width="1" height="3" fill="#222"/><rect x="7.28" y="0" width="1" height="13" fill="#222"/><rect x="2.47" y="10" width="1" height="3" fill="#222"/></svg>
<div class="a t" style="left:542.50px;top:94.3px;width:79px;text-align:right;font-weight:bold;font-size:8.7px;letter-spacing:0.35px;color:#1a1a1a;-webkit-text-stroke:0.2px #1a1a1a;clip-path:inset(0 0 0 0.0px)">0.0</div>
<div class="a t" style="left:494.44px;top:94.3px;width:79px;text-align:right;font-weight:bold;font-size:8.7px;letter-spacing:0.35px;color:#1a1a1a;-webkit-text-stroke:0.2px #1a1a1a;clip-path:inset(0 0 0 0.0px)">100.0</div>
<div class="a t" style="left:446.38px;top:94.3px;width:79px;text-align:right;font-weight:bold;font-size:8.7px;letter-spacing:0.35px;color:#1a1a1a;-webkit-text-stroke:0.2px #1a1a1a;clip-path:inset(0 0 0 0.0px)">200.0</div>
<div class="a t" style="left:398.32px;top:94.3px;width:79px;text-align:right;font-weight:bold;font-size:8.7px;letter-spacing:0.35px;color:#1a1a1a;-webkit-text-stroke:0.2px #1a1a1a;clip-path:inset(0 0 0 0.0px)">300.0</div>
<div class="a t" style="left:350.26px;top:94.3px;width:79px;text-align:right;font-weight:bold;font-size:8.7px;letter-spacing:0.35px;color:#1a1a1a;-webkit-text-stroke:0.2px #1a1a1a;clip-path:inset(0 0 0 0.0px)">400.0</div>
<div class="a t" style="left:302.20px;top:94.3px;width:79px;text-align:right;font-weight:bold;font-size:8.7px;letter-spacing:0.35px;color:#1a1a1a;-webkit-text-stroke:0.2px #1a1a1a;clip-path:inset(0 0 0 0.0px)">500.0</div>
<div class="a t" style="left:254.14px;top:94.3px;width:79px;text-align:right;font-weight:bold;font-size:8.7px;letter-spacing:0.35px;color:#1a1a1a;-webkit-text-stroke:0.2px #1a1a1a;clip-path:inset(0 0 0 0.0px)">600.0</div>
<div class="a t" style="left:206.08px;top:94.3px;width:79px;text-align:right;font-weight:bold;font-size:8.7px;letter-spacing:0.35px;color:#1a1a1a;-webkit-text-stroke:0.2px #1a1a1a;clip-path:inset(0 0 0 0.0px)">700.0</div>
<div class="a t" style="left:158.02px;top:94.3px;width:79px;text-align:right;font-weight:bold;font-size:8.7px;letter-spacing:0.35px;color:#1a1a1a;-webkit-text-stroke:0.2px #1a1a1a;clip-path:inset(0 0 0 0.0px)">800.0</div>
<div class="a t" style="left:109.96px;top:94.3px;width:79px;text-align:right;font-weight:bold;font-size:8.7px;letter-spacing:0.35px;color:#1a1a1a;-webkit-text-stroke:0.2px #1a1a1a;clip-path:inset(0 0 0 0.0px)">900.0</div>
<div class="a t" style="left:61.90px;top:94.3px;width:79px;text-align:right;font-weight:bold;font-size:8.7px;letter-spacing:0.35px;color:#1a1a1a;-webkit-text-stroke:0.2px #1a1a1a;clip-path:inset(0 0 0 0.0px)">1000.0</div>
<div class="a t" style="left:13.84px;top:94.3px;width:79px;text-align:right;font-weight:bold;font-size:8.7px;letter-spacing:0.35px;color:#1a1a1a;-webkit-text-stroke:0.2px #1a1a1a;clip-path:inset(0 0 0 24.2px)">1100.0</div>
<div class="a t" style="left:-34.22px;top:94.3px;width:79px;text-align:right;font-weight:bold;font-size:8.7px;letter-spacing:0.35px;color:#1a1a1a;-webkit-text-stroke:0.2px #1a1a1a;clip-path:inset(0 0 0 72.2px)">1200.0</div>
<div class="a" style="left:25px;top:112px;width:13px;height:489px;background:#fff"></div>
<svg class="a" style="left:25px;top:112px;" width="13" height="489" viewBox="0 0 13 489"><rect x="9" y="18.16" width="3" height="1" fill="#222"/><rect x="7" y="22.97" width="5" height="1" fill="#222"/><rect x="9" y="27.78" width="3" height="1" fill="#222"/><rect x="9" y="32.58" width="3" height="1" fill="#222"/><rect x="9" y="37.39" width="3" height="1" fill="#222"/><rect x="9" y="42.19" width="3" height="1" fill="#222"/><rect x="0" y="47.00" width="5" height="1" fill="#222"/><rect x="8" y="47.00" width="4" height="1" fill="#222"/><rect x="9" y="51.81" width="3" height="1" fill="#222"/><rect x="9" y="56.61" width="3" height="1" fill="#222"/><rect x="9" y="61.42" width="3" height="1" fill="#222"/><rect x="9" y="66.22" width="3" height="1" fill="#222"/><rect x="7" y="71.03" width="5" height="1" fill="#222"/><rect x="9" y="75.84" width="3" height="1" fill="#222"/><rect x="9" y="80.64" width="3" height="1" fill="#222"/><rect x="9" y="85.45" width="3" height="1" fill="#222"/><rect x="9" y="90.25" width="3" height="1" fill="#222"/><rect x="0" y="95.06" width="5" height="1" fill="#222"/><rect x="8" y="95.06" width="4" height="1" fill="#222"/><rect x="9" y="99.87" width="3" height="1" fill="#222"/><rect x="9" y="104.67" width="3" height="1" fill="#222"/><rect x="9" y="109.48" width="3" height="1" fill="#222"/><rect x="9" y="114.28" width="3" height="1" fill="#222"/><rect x="7" y="119.09" width="5" height="1" fill="#222"/><rect x="9" y="123.90" width="3" height="1" fill="#222"/><rect x="9" y="128.70" width="3" height="1" fill="#222"/><rect x="9" y="133.51" width="3" height="1" fill="#222"/><rect x="9" y="138.31" width="3" height="1" fill="#222"/><rect x="0" y="143.12" width="5" height="1" fill="#222"/><rect x="8" y="143.12" width="4" height="1" fill="#222"/><rect x="9" y="147.93" width="3" height="1" fill="#222"/><rect x="9" y="152.73" width="3" height="1" fill="#222"/><rect x="9" y="157.54" width="3" height="1" fill="#222"/><rect x="9" y="162.34" width="3" height="1" fill="#222"/><rect x="7" y="167.15" width="5" height="1" fill="#222"/><rect x="9" y="171.96" width="3" height="1" fill="#222"/><rect x="9" y="176.76" width="3" height="1" fill="#222"/><rect x="9" y="181.57" width="3" height="1" fill="#222"/><rect x="9" y="186.37" width="3" height="1" fill="#222"/><rect x="0" y="191.18" width="5" height="1" fill="#222"/><rect x="8" y="191.18" width="4" height="1" fill="#222"/><rect x="9" y="195.99" width="3" height="1" fill="#222"/><rect x="9" y="200.79" width="3" height="1" fill="#222"/><rect x="9" y="205.60" width="3" height="1" fill="#222"/><rect x="9" y="210.40" width="3" height="1" fill="#222"/><rect x="7" y="215.21" width="5" height="1" fill="#222"/><rect x="9" y="220.02" width="3" height="1" fill="#222"/><rect x="9" y="224.82" width="3" height="1" fill="#222"/><rect x="9" y="229.63" width="3" height="1" fill="#222"/><rect x="9" y="234.43" width="3" height="1" fill="#222"/><rect x="0" y="239.24" width="5" height="1" fill="#222"/><rect x="8" y="239.24" width="4" height="1" fill="#222"/><rect x="9" y="244.05" width="3" height="1" fill="#222"/><rect x="9" y="248.85" width="3" height="1" fill="#222"/><rect x="9" y="253.66" width="3" height="1" fill="#222"/><rect x="9" y="258.46" width="3" height="1" fill="#222"/><rect x="7" y="263.27" width="5" height="1" fill="#222"/><rect x="9" y="268.08" width="3" height="1" fill="#222"/><rect x="9" y="272.88" width="3" height="1" fill="#222"/><rect x="9" y="277.69" width="3" height="1" fill="#222"/><rect x="9" y="282.49" width="3" height="1" fill="#222"/><rect x="0" y="287.30" width="5" height="1" fill="#222"/><rect x="8" y="287.30" width="4" height="1" fill="#222"/><rect x="9" y="292.11" width="3" height="1" fill="#222"/><rect x="9" y="296.91" width="3" height="1" fill="#222"/><rect x="9" y="301.72" width="3" height="1" fill="#222"/><rect x="9" y="306.52" width="3" height="1" fill="#222"/><rect x="7" y="311.33" width="5" height="1" fill="#222"/><rect x="9" y="316.14" width="3" height="1" fill="#222"/><rect x="9" y="320.94" width="3" height="1" fill="#222"/><rect x="9" y="325.75" width="3" height="1" fill="#222"/><rect x="9" y="330.55" width="3" height="1" fill="#222"/><rect x="0" y="335.36" width="5" height="1" fill="#222"/><rect x="8" y="335.36" width="4" height="1" fill="#222"/><rect x="9" y="340.17" width="3" height="1" fill="#222"/><rect x="9" y="344.97" width="3" height="1" fill="#222"/><rect x="9" y="349.78" width="3" height="1" fill="#222"/><rect x="9" y="354.58" width="3" height="1" fill="#222"/><rect x="7" y="359.39" width="5" height="1" fill="#222"/><rect x="9" y="364.20" width="3" height="1" fill="#222"/><rect x="9" y="369.00" width="3" height="1" fill="#222"/><rect x="9" y="373.81" width="3" height="1" fill="#222"/><rect x="9" y="378.61" width="3" height="1" fill="#222"/><rect x="0" y="383.42" width="5" height="1" fill="#222"/><rect x="8" y="383.42" width="4" height="1" fill="#222"/><rect x="9" y="388.23" width="3" height="1" fill="#222"/><rect x="9" y="393.03" width="3" height="1" fill="#222"/><rect x="9" y="397.84" width="3" height="1" fill="#222"/><rect x="9" y="402.64" width="3" height="1" fill="#222"/><rect x="7" y="407.45" width="5" height="1" fill="#222"/><rect x="9" y="412.26" width="3" height="1" fill="#222"/><rect x="9" y="417.06" width="3" height="1" fill="#222"/><rect x="9" y="421.87" width="3" height="1" fill="#222"/><rect x="9" y="426.67" width="3" height="1" fill="#222"/><rect x="0" y="431.48" width="5" height="1" fill="#222"/><rect x="8" y="431.48" width="4" height="1" fill="#222"/><rect x="9" y="436.29" width="3" height="1" fill="#222"/><rect x="9" y="441.09" width="3" height="1" fill="#222"/><rect x="9" y="445.90" width="3" height="1" fill="#222"/><rect x="9" y="450.70" width="3" height="1" fill="#222"/><rect x="7" y="455.51" width="5" height="1" fill="#222"/><rect x="9" y="460.32" width="3" height="1" fill="#222"/><rect x="9" y="465.12" width="3" height="1" fill="#222"/><rect x="9" y="469.93" width="3" height="1" fill="#222"/><rect x="9" y="474.73" width="3" height="1" fill="#222"/><rect x="0" y="479.54" width="5" height="1" fill="#222"/><rect x="8" y="479.54" width="4" height="1" fill="#222"/><rect x="9" y="484.35" width="3" height="1" fill="#222"/></svg>
<div class="a" style="left:25px;top:112px;width:13px;height:489px;overflow:hidden">
<div class="a" style="left:2px;top:-1.06px;width:60px;height:10px;line-height:10px;transform-origin:0 0;transform:rotate(-90deg);font-weight:bold;font-size:8.7px;letter-spacing:0.35px;color:#1a1a1a;white-space:nowrap;-webkit-text-stroke:0.25px #1a1a1a">100.0</div>
<div class="a" style="left:2px;top:47.00px;width:60px;height:10px;line-height:10px;transform-origin:0 0;transform:rotate(-90deg);font-weight:bold;font-size:8.7px;letter-spacing:0.35px;color:#1a1a1a;white-space:nowrap;-webkit-text-stroke:0.25px #1a1a1a">0.0</div>
<div class="a" style="left:2px;top:95.06px;width:60px;height:10px;line-height:10px;transform-origin:0 0;transform:rotate(-90deg);font-weight:bold;font-size:8.7px;letter-spacing:0.35px;color:#1a1a1a;white-space:nowrap;-webkit-text-stroke:0.25px #1a1a1a">100.0</div>
<div class="a" style="left:2px;top:143.12px;width:60px;height:10px;line-height:10px;transform-origin:0 0;transform:rotate(-90deg);font-weight:bold;font-size:8.7px;letter-spacing:0.35px;color:#1a1a1a;white-space:nowrap;-webkit-text-stroke:0.25px #1a1a1a">200.0</div>
<div class="a" style="left:2px;top:191.18px;width:60px;height:10px;line-height:10px;transform-origin:0 0;transform:rotate(-90deg);font-weight:bold;font-size:8.7px;letter-spacing:0.35px;color:#1a1a1a;white-space:nowrap;-webkit-text-stroke:0.25px #1a1a1a">300.0</div>
<div class="a" style="left:2px;top:239.24px;width:60px;height:10px;line-height:10px;transform-origin:0 0;transform:rotate(-90deg);font-weight:bold;font-size:8.7px;letter-spacing:0.35px;color:#1a1a1a;white-space:nowrap;-webkit-text-stroke:0.25px #1a1a1a">400.0</div>
<div class="a" style="left:2px;top:287.30px;width:60px;height:10px;line-height:10px;transform-origin:0 0;transform:rotate(-90deg);font-weight:bold;font-size:8.7px;letter-spacing:0.35px;color:#1a1a1a;white-space:nowrap;-webkit-text-stroke:0.25px #1a1a1a">500.0</div>
<div class="a" style="left:2px;top:335.36px;width:60px;height:10px;line-height:10px;transform-origin:0 0;transform:rotate(-90deg);font-weight:bold;font-size:8.7px;letter-spacing:0.35px;color:#1a1a1a;white-space:nowrap;-webkit-text-stroke:0.25px #1a1a1a">600.0</div>
<div class="a" style="left:2px;top:383.42px;width:60px;height:10px;line-height:10px;transform-origin:0 0;transform:rotate(-90deg);font-weight:bold;font-size:8.7px;letter-spacing:0.35px;color:#1a1a1a;white-space:nowrap;-webkit-text-stroke:0.25px #1a1a1a">700.0</div>
<div class="a" style="left:2px;top:431.48px;width:60px;height:10px;line-height:10px;transform-origin:0 0;transform:rotate(-90deg);font-weight:bold;font-size:8.7px;letter-spacing:0.35px;color:#1a1a1a;white-space:nowrap;-webkit-text-stroke:0.25px #1a1a1a">800.0</div>
<div class="a" style="left:2px;top:479.54px;width:60px;height:10px;line-height:10px;transform-origin:0 0;transform:rotate(-90deg);font-weight:bold;font-size:8.7px;letter-spacing:0.35px;color:#1a1a1a;white-space:nowrap;-webkit-text-stroke:0.25px #1a1a1a">900.0</div>
</div>
<div class="a" style="left:37px;top:112px;width:1px;height:489px;background:#333"></div>
<div class="a" style="left:38px;top:112px;width:591px;height:480px;background:#fff"></div>
<div class="a" style="left:38px;top:112px;width:1.5px;height:480px;background:#222"></div>
<div class="a" style="left:38px;top:112px;width:591px;height:1px;background:#222"></div>
<svg class="a" style="left:45.1px;top:159.2px;overflow:visible" width="577.4" height="385.3" viewBox="0 0 577.4 385.3"><rect x="23.56" y="0" width="1" height="385.3" fill="#858585"/><rect x="47.62" y="0" width="1" height="385.3" fill="#858585"/><rect x="71.67" y="0" width="1" height="385.3" fill="#858585"/><rect x="95.73" y="0" width="1" height="385.3" fill="#858585"/><rect x="119.79" y="0" width="1" height="385.3" fill="#858585"/><rect x="143.85" y="0" width="1" height="385.3" fill="#858585"/><rect x="167.91" y="0" width="1" height="385.3" fill="#858585"/><rect x="191.97" y="0" width="1" height="385.3" fill="#858585"/><rect x="216.02" y="0" width="1" height="385.3" fill="#858585"/><rect x="240.08" y="0" width="1" height="385.3" fill="#858585"/><rect x="264.14" y="0" width="1" height="385.3" fill="#858585"/><rect x="288.20" y="0" width="1" height="385.3" fill="#858585"/><rect x="312.26" y="0" width="1" height="385.3" fill="#858585"/><rect x="336.32" y="0" width="1" height="385.3" fill="#858585"/><rect x="360.38" y="0" width="1" height="385.3" fill="#858585"/><rect x="384.43" y="0" width="1" height="385.3" fill="#858585"/><rect x="408.49" y="0" width="1" height="385.3" fill="#858585"/><rect x="432.55" y="0" width="1" height="385.3" fill="#858585"/><rect x="456.61" y="0" width="1" height="385.3" fill="#858585"/><rect x="480.67" y="0" width="1" height="385.3" fill="#858585"/><rect x="504.72" y="0" width="1" height="385.3" fill="#858585"/><rect x="528.78" y="0" width="1" height="385.3" fill="#858585"/><rect x="552.84" y="0" width="1" height="385.3" fill="#858585"/><rect x="0" y="23.58" width="577.4" height="1" fill="#858585"/><rect x="0" y="47.66" width="577.4" height="1" fill="#858585"/><rect x="0" y="71.74" width="577.4" height="1" fill="#858585"/><rect x="0" y="95.83" width="577.4" height="1" fill="#858585"/><rect x="0" y="119.91" width="577.4" height="1" fill="#858585"/><rect x="0" y="143.99" width="577.4" height="1" fill="#858585"/><rect x="0" y="168.07" width="577.4" height="1" fill="#858585"/><rect x="0" y="192.15" width="577.4" height="1" fill="#858585"/><rect x="0" y="216.23" width="577.4" height="1" fill="#858585"/><rect x="0" y="240.31" width="577.4" height="1" fill="#858585"/><rect x="0" y="264.39" width="577.4" height="1" fill="#858585"/><rect x="0" y="288.48" width="577.4" height="1" fill="#858585"/><rect x="0" y="312.56" width="577.4" height="1" fill="#858585"/><rect x="0" y="336.64" width="577.4" height="1" fill="#858585"/><rect x="0" y="360.72" width="577.4" height="1" fill="#858585"/><rect x="0" y="0" width="577.4" height="385.3" fill="none" stroke="#111" stroke-width="2"/></svg>
<svg class="a" style="left:598px;top:152px;" width="30" height="36" viewBox="0 0 30 36"><path d="M24.5 8 H8" stroke="#1030c0" stroke-width="2"/><path d="M3 8 L10 4 L10 12 Z" fill="#1030c0"/><path d="M24.5 8 V25" stroke="#1030c0" stroke-width="2"/><path d="M24.5 31 L20.5 24 L28.5 24 Z" fill="#1030c0"/><rect x="23" y="6.5" width="3" height="3" fill="#e02020"/></svg>
<div class="a" style="left:39px;top:540px;width:11px;height:11px;background:#10e010;border:1px solid #0a7a0a;box-sizing:border-box"></div>
<div class="a" style="left:629px;top:112px;width:10px;height:480px;background:#d8d0c8"></div>
<div class="a" style="left:629px;top:112px;width:10px;height:9px;background:#a89b93;border-top:1px solid #d6cfc8;border-left:1px solid #d6cfc8;border-right:1px solid #3a332e;border-bottom:1px solid #3a332e;box-shadow:inset -1px -1px #756a63;box-sizing:border-box;"></div>
<svg class="a" style="left:629px;top:112px;" width="10" height="9" viewBox="0 0 10 9"><path d="M3 5.5 H7 L5 3.5 Z" fill="#111"/></svg>
<div class="a" style="left:629px;top:583px;width:10px;height:9px;background:#a89b93;border-top:1px solid #d6cfc8;border-left:1px solid #d6cfc8;border-right:1px solid #3a332e;border-bottom:1px solid #3a332e;box-shadow:inset -1px -1px #756a63;box-sizing:border-box;"></div>
<svg class="a" style="left:629px;top:583px;" width="10" height="9" viewBox="0 0 10 9"><path d="M3 3.5 H7 L5 5.5 Z" fill="#111"/></svg>
<div class="a" style="left:38px;top:592px;width:591px;height:9px;background:#d8d0c8"></div>
<div class="a" style="left:39px;top:592px;width:9px;height:9px;background:#a89b93;border-top:1px solid #d6cfc8;border-left:1px solid #d6cfc8;border-right:1px solid #3a332e;border-bottom:1px solid #3a332e;box-shadow:inset -1px -1px #756a63;box-sizing:border-box;"></div>
<svg class="a" style="left:39px;top:592px;" width="9" height="9" viewBox="0 0 9 9"><path d="M5.5 2.5 V6.5 L3.5 4.5 Z" fill="#111"/></svg>
<div class="a" style="left:620px;top:592px;width:9px;height:9px;background:#a89b93;border-top:1px solid #d6cfc8;border-left:1px solid #d6cfc8;border-right:1px solid #3a332e;border-bottom:1px solid #3a332e;box-shadow:inset -1px -1px #756a63;box-sizing:border-box;"></div>
<svg class="a" style="left:620px;top:592px;" width="9" height="9" viewBox="0 0 9 9"><path d="M3.5 2.5 V6.5 L5.5 4.5 Z" fill="#111"/></svg>
<div class="a" style="left:422px;top:592px;width:5px;height:9px;background:#a89b93;border-top:1px solid #d6cfc8;border-left:1px solid #d6cfc8;border-right:1px solid #3a332e;border-bottom:1px solid #3a332e;box-shadow:inset -1px -1px #756a63;box-sizing:border-box;"></div>
<div class="a" style="left:629px;top:592px;width:10px;height:9px;background:#a89b93"></div>
<svg class="a" style="left:5px;top:100px;" width="18" height="2" viewBox="0 0 18 2"><rect x="0" y="0" width="1.2" height="1.2" fill="#e8e2dc"/><rect x="3" y="0" width="1.2" height="1.2" fill="#e8e2dc"/><rect x="6" y="0" width="1.2" height="1.2" fill="#e8e2dc"/><rect x="9" y="0" width="1.2" height="1.2" fill="#e8e2dc"/><rect x="12" y="0" width="1.2" height="1.2" fill="#e8e2dc"/><rect x="15" y="0" width="1.2" height="1.2" fill="#e8e2dc"/></svg>
<div class="a" style="left:4px;top:104px;width:20px;height:22px;background:#b3a9a2;border-top:1px solid #756a63;border-left:1px solid #756a63;border-right:1px solid #d6cfc8;border-bottom:1px solid #d6cfc8;box-shadow:inset 1px 1px #3a332e;box-sizing:border-box;box-shadow:none;border-color:#857a73 #cfc7c0 #cfc7c0 #857a73"></div>
<div class="a" style="left:4px;top:126.5px;width:20px;height:20px;border-bottom:1px solid #857a73;border-top:1px solid #c4bcb5;box-sizing:border-box"></div>
<svg class="a" style="left:8px;top:107px;" width="13" height="16" viewBox="0 0 13 16"><path d="M2.5 1 L2.5 12.5 L5 10 L7.5 14.5 L9.5 13.5 L7.5 9 L11 9 Z" fill="#c8f0c8" stroke="#4a8a6a" stroke-width="1"/></svg>
<svg class="a" style="left:8px;top:131px;" width="12" height="14" viewBox="0 0 12 14"><path d="M2.5 1.5 L10 7 L2.5 12.5 Z" fill="#e8e8ec" stroke="#3a3a3a" stroke-width="1.1"/></svg>
<div class="a" style="left:3px;top:149px;width:21px;height:1px;background:#756a63"></div>
<div class="a" style="left:3px;top:150px;width:21px;height:1px;background:#d6cfc8"></div>
<svg class="a" style="left:5px;top:153px;" width="18" height="17" viewBox="0 0 18 17"><path d="M2 15 L16 2" stroke="#7a8a98" stroke-width="1.2"/><circle cx="2" cy="15" r="1.3" fill="#8898a8"/><circle cx="16" cy="2" r="1.3" fill="#8898a8"/></svg>
<svg class="a" style="left:5px;top:175px;" width="18" height="17" viewBox="0 0 18 17"><path d="M2 15 L16 2" stroke="#7a8a98" stroke-width="1.2"/><circle cx="2" cy="15" r="1.3" fill="#8898a8"/><circle cx="9" cy="8.5" r="1.3" fill="#8898a8"/><circle cx="16" cy="2" r="1.3" fill="#8898a8"/></svg>
<svg class="a" style="left:5px;top:197px;" width="18" height="18" viewBox="0 0 18 18"><path d="M2 2 L6 10 L10 6 L16 16" stroke="#7a8a98" stroke-width="1.2" fill="none"/><circle cx="2" cy="2" r="1.2" fill="#8898a8"/><circle cx="6" cy="10" r="1.2" fill="#8898a8"/><circle cx="10" cy="6" r="1.2" fill="#8898a8"/><circle cx="16" cy="16" r="1.2" fill="#8898a8"/></svg>
<svg class="a" style="left:6px;top:220.5px;" width="15" height="14" viewBox="0 0 15 14"><rect x="0.7" y="0.7" width="13.6" height="12.6" rx="1" fill="#f8d800" stroke="#b89800" stroke-width="1"/></svg>
<svg class="a" style="left:5px;top:242.5px;" width="17" height="10" viewBox="0 0 17 10"><ellipse cx="8.5" cy="5" rx="7.5" ry="4.3" fill="#f8d800" stroke="#b89800" stroke-width="1"/></svg>
<svg class="a" style="left:5px;top:264px;" width="18" height="16" viewBox="0 0 18 16"><path d="M7.5 2 Q5 1.5 4.5 4.5 V14 M2 6.5 H7" stroke="#5a4a10" stroke-width="3.2" fill="none"/><path d="M7.5 2 Q5 1.5 4.5 4.5 V14 M2 6.5 H7" stroke="#f0d020" stroke-width="1.8" fill="none"/><path d="M10 2 H16.5 M13.25 2 V13.5 M10 13.5 H16.5" stroke="#20305a" stroke-width="3"/><path d="M10.5 2 H16 M13.25 2 V13.5 M10.5 13.5 H16" stroke="#6a8ad0" stroke-width="1.4"/></svg>
<svg class="a" style="left:7px;top:286px;" width="14" height="13" viewBox="0 0 14 13"><path d="M7 1 V12 M1.5 6.5 H12.5 M3 2.5 L11 10.5 M11 2.5 L3 10.5" stroke="#222" stroke-width="0.9"/></svg>
<div class="a" style="left:3px;top:305px;width:21px;height:1px;background:#756a63"></div>
<div class="a" style="left:3px;top:306px;width:21px;height:1px;background:#d6cfc8"></div>
<svg class="a" style="left:5px;top:311px;" width="18" height="16" viewBox="0 0 18 16"><path d="M3 2 L15 14 M15 2 L3 14" stroke="#151515" stroke-width="3.4"/></svg>
<div class="a" style="left:3px;top:332px;width:21px;height:1px;background:#756a63"></div>
<div class="a" style="left:3px;top:333px;width:21px;height:1px;background:#d6cfc8"></div>
<svg class="a" style="left:5px;top:337px;" width="18" height="16" viewBox="0 0 18 16"><path d="M9 1 L2 14 H9 Z" fill="#505858" stroke="#222" stroke-width="0.8"/><path d="M10 1 L16 14 H10 Z" fill="#a0a8a8" stroke="#222" stroke-width="0.8"/><path d="M9.5 0 V16" stroke="#222" stroke-width="0.8"/></svg>
<svg class="a" style="left:5px;top:357px;" width="18" height="17" viewBox="0 0 18 17"><path d="M16 2 L2 9 L16 9 Z" fill="#f0f0f0" stroke="#222" stroke-width="0.9"/><path d="M16 10 L2 10 L16 16 Z" fill="#f0f0f0" stroke="#222" stroke-width="0.9"/><path d="M0 9.5 H18" stroke="#222" stroke-width="0.8"/></svg>
<svg class="a" style="left:5px;top:380px;" width="18" height="16" viewBox="0 0 18 16"><rect x="4" y="1" width="13" height="11" fill="#505050" stroke="#222" stroke-width="0.8"/><path d="M1 1 V15 H17" stroke="#222" stroke-width="2" fill="none"/></svg>
<svg class="a" style="left:5px;top:401px;" width="18" height="17" viewBox="0 0 18 17"><g fill="none" stroke="#333" stroke-width="0.9"><rect x="1.0" y="1.0" width="4.5" height="4.5"/><rect x="1.0" y="6.5" width="4.5" height="4.5"/><rect x="1.0" y="12.0" width="4.5" height="4.5"/><rect x="6.5" y="1.0" width="4.5" height="4.5"/><rect x="6.5" y="6.5" width="4.5" height="4.5"/><rect x="6.5" y="12.0" width="4.5" height="4.5"/><rect x="12.0" y="1.0" width="4.5" height="4.5"/><rect x="12.0" y="6.5" width="4.5" height="4.5"/><rect x="12.0" y="12.0" width="4.5" height="4.5"/></g></svg>
<div class="a" style="left:639px;top:98px;width:1px;height:503px;background:#d6cfc8"></div>
<div class="a" style="left:641px;top:102px;width:195px;height:1px;background:#d6cfc8"></div>
<div class="a" style="left:641px;top:103px;width:195px;height:1px;background:#756a63"></div>
<div class="a" style="left:641px;top:105px;width:195px;height:1px;background:#d6cfc8"></div>
<div class="a" style="left:641px;top:106px;width:195px;height:1px;background:#756a63"></div>
<svg class="a" style="left:836.5px;top:100.5px;" width="8" height="8" viewBox="0 0 8 8"><path d="M1.5 1.5 L6.5 6.5 M6.5 1.5 L1.5 6.5" stroke="#111" stroke-width="1.4"/></svg>
<div class="a" style="left:643px;top:124px;width:200px;height:290px;border-top:1px solid #d6cfc8;border-left:1px solid #d6cfc8;border-right:1px solid #3a332e;border-bottom:1px solid #3a332e;box-shadow:inset -1px -1px #756a63;box-sizing:border-box"></div>
<div class="a" style="left:676px;top:112.5px;width:30px;height:12px;background:#a89b93;border-top:1px solid #d6cfc8;border-left:1px solid #d6cfc8;border-right:1px solid #3a332e;box-shadow:inset -1px 0 #756a63;box-sizing:border-box"></div>
<div class="a t" style="left:679px;top:109.3px;font-size:8.29px;color:#1a1a1a;transform:scaleX(0.893);transform-origin:0 50%;">Output</div>
<div class="a" style="left:707px;top:112.5px;width:29px;height:12px;background:#a89b93;border-top:1px solid #d6cfc8;border-left:1px solid #d6cfc8;border-right:1px solid #3a332e;box-shadow:inset -1px 0 #756a63;box-sizing:border-box"></div>
<div class="a t" style="left:710px;top:109.3px;font-size:8.29px;color:#1a1a1a;transform:scaleX(0.893);transform-origin:0 50%;">Doc</div>
<div class="a" style="left:737px;top:112.5px;width:28px;height:12px;background:#a89b93;border-top:1px solid #d6cfc8;border-left:1px solid #d6cfc8;border-right:1px solid #3a332e;box-shadow:inset -1px 0 #756a63;box-sizing:border-box"></div>
<div class="a t" style="left:740px;top:109.3px;font-size:8.29px;color:#1a1a1a;transform:scaleX(0.893);transform-origin:0 50%;">User</div>
<div class="a" style="left:766px;top:112.5px;width:29px;height:12px;background:#a89b93;border-top:1px solid #d6cfc8;border-left:1px solid #d6cfc8;border-right:1px solid #3a332e;box-shadow:inset -1px 0 #756a63;box-sizing:border-box"></div>
<div class="a t" style="left:769px;top:109.3px;font-size:8.29px;color:#1a1a1a;transform:scaleX(0.893);transform-origin:0 50%;">Test</div>
<div class="a" style="left:644.5px;top:110.5px;width:31px;height:14.5px;background:#a89b93;border-top:1px solid #d6cfc8;border-left:1px solid #d6cfc8;border-right:1px solid #3a332e;box-shadow:inset -1px 0 #756a63;box-sizing:border-box"></div>
<div class="a t" style="left:649px;top:108.3px;font-size:8.29px;color:#1a1a1a;transform:scaleX(0.893);transform-origin:0 50%;">Work</div>
<div class="a" style="left:647px;top:126.5px;width:190px;height:82px;background:#dcd3ce;border-top:1px solid #756a63;border-left:1px solid #756a63;border-right:1px solid #d6cfc8;border-bottom:1px solid #d6cfc8;box-shadow:inset 1px 1px #3a332e;box-sizing:border-box;"></div>
<div class="a" style="left:648.5px;top:128px;width:188px;height:10.5px;background:#a89b93"></div>
<div class="a" style="left:648.5px;top:128px;width:34.5px;height:10.5px;border-right:1px solid #756a63;border-bottom:1px solid #756a63;border-left:1px solid #d6cfc8;box-sizing:border-box"></div>
<div class="a" style="left:683px;top:128px;width:86.5px;height:10.5px;border-right:1px solid #756a63;border-bottom:1px solid #756a63;border-left:1px solid #d6cfc8;box-sizing:border-box"></div>
<div class="a" style="left:769.5px;top:128px;width:35.5px;height:10.5px;border-right:1px solid #756a63;border-bottom:1px solid #756a63;border-left:1px solid #d6cfc8;box-sizing:border-box"></div>
<div class="a" style="left:805px;top:128px;width:31.5px;height:10.5px;border-right:1px solid #756a63;border-bottom:1px solid #756a63;border-left:1px solid #d6cfc8;box-sizing:border-box"></div>
<div class="a t" style="left:651px;top:123.8px;font-size:8.29px;color:#1a1a1a;transform:scaleX(0.893);transform-origin:0 50%;">Layer</div>
<div class="a t" style="left:683px;top:123.8px;font-size:8.29px;color:#1a1a1a;width:96.32px;text-align:center;transform:scaleX(0.893);transform-origin:0 50%;">Mode</div>
<div class="a t" style="left:771px;top:123.8px;font-size:8.29px;color:#1a1a1a;transform:scaleX(0.893);transform-origin:0 50%;">Output</div>
<div class="a t" style="left:805px;top:123.8px;font-size:8.29px;color:#1a1a1a;width:35.84px;text-align:center;transform:scaleX(0.893);transform-origin:0 50%;">Hide</div>
<div class="a" style="left:648.5px;top:149.7px;width:188px;height:1px;background:#b0a69f"></div>
<div class="a" style="left:648.5px;top:159.7px;width:188px;height:1px;background:#b0a69f"></div>
<div class="a" style="left:648.5px;top:169.7px;width:188px;height:1px;background:#b0a69f"></div>
<div class="a" style="left:648.5px;top:179.7px;width:188px;height:1px;background:#b0a69f"></div>
<div class="a" style="left:648.5px;top:189.7px;width:188px;height:1px;background:#b0a69f"></div>
<div class="a" style="left:683px;top:138.5px;width:1px;height:61px;background:#b0a69f"></div>
<div class="a" style="left:769.5px;top:138.5px;width:1px;height:61px;background:#b0a69f"></div>
<div class="a" style="left:805px;top:138.5px;width:1px;height:61px;background:#b0a69f"></div>
<div class="a" style="left:648.5px;top:199px;width:188px;height:9px;background:#a89b93"></div>
<div class="a" style="left:649px;top:199px;width:178px;height:9px;background:#a89b93;border-top:1px solid #d6cfc8;border-left:1px solid #d6cfc8;border-right:1px solid #3a332e;border-bottom:1px solid #3a332e;box-shadow:inset -1px -1px #756a63;box-sizing:border-box;"></div>
<div class="a" style="left:827px;top:199px;width:9px;height:9px;background:#a89b93;border-top:1px solid #d6cfc8;border-left:1px solid #d6cfc8;border-right:1px solid #3a332e;border-bottom:1px solid #3a332e;box-shadow:inset -1px -1px #756a63;box-sizing:border-box;"></div>
<svg class="a" style="left:827px;top:199px;" width="9" height="9" viewBox="0 0 9 9"><path d="M3.5 2.5 V6.5 L5.5 4.5 Z" fill="#111"/></svg>
<div class="a" style="left:647px;top:212px;width:190px;height:101px;background:#dcd3ce;border-top:1px solid #756a63;border-left:1px solid #756a63;border-right:1px solid #d6cfc8;border-bottom:1px solid #d6cfc8;box-shadow:inset 1px 1px #3a332e;box-sizing:border-box;"></div>
<div class="a" style="left:648px;top:213px;width:91.5px;height:13px;background:#dcd3ce;border-bottom:1px solid #b0a69f;border-right:1px solid #b0a69f;box-sizing:border-box"></div>
<div class="a" style="left:739.5px;top:213px;width:97px;height:13px;background:#dcd3ce;border-bottom:1px solid #b0a69f;box-sizing:border-box"></div>
<div class="a" style="left:648px;top:226px;width:91.5px;height:14px;background:#dcd3ce;border-bottom:1px solid #b0a69f;border-right:1px solid #b0a69f;box-sizing:border-box"></div>
<div class="a" style="left:739.5px;top:226px;width:97px;height:14px;background:#dcd3ce;border-bottom:1px solid #b0a69f;box-sizing:border-box"></div>
<div class="a" style="left:648px;top:240px;width:91.5px;height:14px;background:#dcd3ce;border-bottom:1px solid #b0a69f;border-right:1px solid #b0a69f;box-sizing:border-box"></div>
<div class="a" style="left:739.5px;top:240px;width:97px;height:14px;background:#dcd3ce;border-bottom:1px solid #b0a69f;box-sizing:border-box"></div>
<div class="a" style="left:648px;top:254px;width:91.5px;height:14px;background:#dcd3ce;border-bottom:1px solid #b0a69f;border-right:1px solid #b0a69f;box-sizing:border-box"></div>
<div class="a" style="left:739.5px;top:254px;width:97px;height:14px;background:#dcd3ce;border-bottom:1px solid #b0a69f;box-sizing:border-box"></div>
<div class="a" style="left:648px;top:268px;width:91.5px;height:13px;background:#dcd3ce;border-bottom:1px solid #b0a69f;border-right:1px solid #b0a69f;box-sizing:border-box"></div>
<div class="a" style="left:739.5px;top:268px;width:97px;height:13px;background:#dcd3ce;border-bottom:1px solid #b0a69f;box-sizing:border-box"></div>
<div class="a" style="left:742px;top:215.5px;width:93px;height:9px;background:#000"></div>
<div class="a t" style="left:648px;top:223.3px;font-size:8.29px;color:#1a1a1a;transform:scaleX(0.893);transform-origin:0 50%;">Speed(mm/s)</div>
<div class="a t" style="left:743px;top:223.8px;font-size:8.29px;color:#1a1a1a;transform:scaleX(0.893);transform-origin:0 50%;">100.00</div>
<div class="a t" style="left:649px;top:237.3px;font-size:8.29px;color:#1a1a1a;transform:scaleX(0.893);transform-origin:0 50%;">Min power(%)-1</div>
<div class="a t" style="left:743px;top:237.8px;font-size:8.29px;color:#1a1a1a;transform:scaleX(0.893);transform-origin:0 50%;">30.0</div>
<div class="a t" style="left:649.5px;top:251.3px;font-size:8.29px;color:#1a1a1a;transform:scaleX(0.893);transform-origin:0 50%;">Max power(%)-1</div>
<div class="a t" style="left:743px;top:251.8px;font-size:8.29px;color:#1a1a1a;transform:scaleX(0.893);transform-origin:0 50%;">30.0</div>
<div class="a t" style="left:743px;top:265.3px;font-size:8.29px;color:#1a1a1a;transform:scaleX(0.893);transform-origin:0 50%;">1</div>
<div class="a" style="left:660px;top:314.5px;width:23px;height:14px;background:#a89b93;border-top:1px solid #d6cfc8;border-left:1px solid #d6cfc8;border-right:1px solid #3a332e;border-bottom:1px solid #3a332e;box-shadow:inset -1px -1px #756a63;box-sizing:border-box;"></div>
<div class="a" style="left:677px;top:314.5px;width:30px;height:14px;background:#a89b93;border-top:1px solid #d6cfc8;border-left:1px solid #d6cfc8;border-right:1px solid #3a332e;border-bottom:1px solid #3a332e;box-shadow:inset -1px -1px #756a63;box-sizing:border-box;"></div>
<div class="a t" style="left:680px;top:311.8px;font-size:8.29px;color:#1a1a1a;transform:scaleX(0.893);transform-origin:0 50%;">Laser2</div>
<div class="a" style="left:645px;top:337px;width:193px;height:69px;border:1px solid #756a63;box-shadow:1px 1px #d6cfc8, inset 1px 1px #d6cfc8;box-sizing:border-box"></div>
<div class="a" style="left:664px;top:332px;width:50px;height:10px;background:#a89b93"></div>
<div class="a t" style="left:666px;top:327.3px;font-size:8.29px;color:#1a1a1a;transform:scaleX(0.893);transform-origin:0 50%;">Column setup</div>
<div class="a t" style="left:654px;top:338.3px;font-size:8.29px;color:#1a1a1a;transform:scaleX(0.893);transform-origin:0 50%;">Column</div>
<div class="a t" style="left:691.5px;top:338.3px;font-size:8.29px;color:#1a1a1a;transform:scaleX(0.893);transform-origin:0 50%;">space1</div>
<div class="a t" style="left:726.5px;top:338.3px;font-size:8.29px;color:#1a1a1a;transform:scaleX(0.893);transform-origin:0 50%;">space2</div>
<div class="a t" style="left:756px;top:338.3px;font-size:8.29px;color:#1a1a1a;transform:scaleX(0.893);transform-origin:0 50%;">Dislocation</div>
<div class="a t" style="left:802px;top:338.3px;font-size:8.29px;color:#1a1a1a;transform:scaleX(0.893);transform-origin:0 50%;">Mirror</div>
<div class="a" style="left:650px;top:355px;width:36px;height:12.5px;background:#a89b93;border-top:1px solid #756a63;border-left:1px solid #756a63;border-right:1px solid #d6cfc8;border-bottom:1px solid #d6cfc8;box-shadow:inset 1px 1px #3a332e;box-sizing:border-box;box-shadow:inset 1px 1px #5a4f48"></div>
<div class="a t" style="left:653px;top:351.55px;font-size:8.29px;color:#8e837b;transform:scaleX(0.893);transform-origin:0 50%;text-shadow:0.6px 0.6px #c8c0b8"></div>
<div class="a" style="left:687.5px;top:355px;width:33px;height:12.5px;background:#a89b93;border-top:1px solid #756a63;border-left:1px solid #756a63;border-right:1px solid #d6cfc8;border-bottom:1px solid #d6cfc8;box-shadow:inset 1px 1px #3a332e;box-sizing:border-box;box-shadow:inset 1px 1px #5a4f48"></div>
<div class="a t" style="left:690.5px;top:351.55px;font-size:8.29px;color:#8e837b;transform:scaleX(0.893);transform-origin:0 50%;text-shadow:0.6px 0.6px #c8c0b8">0.000</div>
<div class="a" style="left:722px;top:355px;width:33px;height:12.5px;background:#a89b93;border-top:1px solid #756a63;border-left:1px solid #756a63;border-right:1px solid #d6cfc8;border-bottom:1px solid #d6cfc8;box-shadow:inset 1px 1px #3a332e;box-sizing:border-box;box-shadow:inset 1px 1px #5a4f48"></div>
<div class="a t" style="left:725px;top:351.55px;font-size:8.29px;color:#8e837b;transform:scaleX(0.893);transform-origin:0 50%;text-shadow:0.6px 0.6px #c8c0b8">0.000</div>
<div class="a" style="left:756px;top:355px;width:33px;height:12.5px;background:#a89b93;border-top:1px solid #756a63;border-left:1px solid #756a63;border-right:1px solid #d6cfc8;border-bottom:1px solid #d6cfc8;box-shadow:inset 1px 1px #3a332e;box-sizing:border-box;box-shadow:inset 1px 1px #5a4f48"></div>
<div class="a t" style="left:759px;top:351.55px;font-size:8.29px;color:#8e837b;transform:scaleX(0.893);transform-origin:0 50%;text-shadow:0.6px 0.6px #c8c0b8">0.000</div>
<div class="a" style="left:650px;top:369.5px;width:36px;height:12.5px;background:#a89b93;border-top:1px solid #756a63;border-left:1px solid #756a63;border-right:1px solid #d6cfc8;border-bottom:1px solid #d6cfc8;box-shadow:inset 1px 1px #3a332e;box-sizing:border-box;box-shadow:inset 1px 1px #5a4f48"></div>
<div class="a t" style="left:653px;top:366.05px;font-size:8.29px;color:#8e837b;transform:scaleX(0.893);transform-origin:0 50%;text-shadow:0.6px 0.6px #c8c0b8"></div>
<div class="a" style="left:687.5px;top:369.5px;width:33px;height:12.5px;background:#a89b93;border-top:1px solid #756a63;border-left:1px solid #756a63;border-right:1px solid #d6cfc8;border-bottom:1px solid #d6cfc8;box-shadow:inset 1px 1px #3a332e;box-sizing:border-box;box-shadow:inset 1px 1px #5a4f48"></div>
<div class="a t" style="left:690.5px;top:366.05px;font-size:8.29px;color:#8e837b;transform:scaleX(0.893);transform-origin:0 50%;text-shadow:0.6px 0.6px #c8c0b8">0.000</div>
<div class="a" style="left:722px;top:369.5px;width:33px;height:12.5px;background:#a89b93;border-top:1px solid #756a63;border-left:1px solid #756a63;border-right:1px solid #d6cfc8;border-bottom:1px solid #d6cfc8;box-shadow:inset 1px 1px #3a332e;box-sizing:border-box;box-shadow:inset 1px 1px #5a4f48"></div>
<div class="a t" style="left:725px;top:366.05px;font-size:8.29px;color:#8e837b;transform:scaleX(0.893);transform-origin:0 50%;text-shadow:0.6px 0.6px #c8c0b8">0.000</div>
<div class="a" style="left:756px;top:369.5px;width:33px;height:12.5px;background:#a89b93;border-top:1px solid #756a63;border-left:1px solid #756a63;border-right:1px solid #d6cfc8;border-bottom:1px solid #d6cfc8;box-shadow:inset 1px 1px #3a332e;box-sizing:border-box;box-shadow:inset 1px 1px #5a4f48"></div>
<div class="a t" style="left:759px;top:366.05px;font-size:8.29px;color:#8e837b;transform:scaleX(0.893);transform-origin:0 50%;text-shadow:0.6px 0.6px #c8c0b8">0.000</div>
<div class="a" style="left:791px;top:355px;width:45px;height:27.5px;border:1px solid #756a63;box-shadow:inset 1px 1px #d6cfc8;box-sizing:border-box"></div>
<div class="a" style="left:793px;top:358px;width:8px;height:8px;border-top:1px solid #756a63;border-left:1px solid #756a63;border-right:1px solid #d6cfc8;border-bottom:1px solid #d6cfc8;box-sizing:border-box"></div>
<div class="a t" style="left:803px;top:352.8px;font-size:7.84px;color:#8e837b;transform:scaleX(0.893);transform-origin:0 50%;text-shadow:0.6px 0.6px #c8c0b8">H</div>
<div class="a" style="left:813px;top:358px;width:8px;height:8px;border-top:1px solid #756a63;border-left:1px solid #756a63;border-right:1px solid #d6cfc8;border-bottom:1px solid #d6cfc8;box-sizing:border-box"></div>
<div class="a t" style="left:823px;top:352.8px;font-size:7.84px;color:#8e837b;transform:scaleX(0.893);transform-origin:0 50%;text-shadow:0.6px 0.6px #c8c0b8">Y</div>
<div class="a" style="left:793px;top:372px;width:8px;height:8px;border-top:1px solid #756a63;border-left:1px solid #756a63;border-right:1px solid #d6cfc8;border-bottom:1px solid #d6cfc8;box-sizing:border-box"></div>
<div class="a t" style="left:803px;top:366.8px;font-size:7.84px;color:#8e837b;transform:scaleX(0.893);transform-origin:0 50%;text-shadow:0.6px 0.6px #c8c0b8">H</div>
<div class="a" style="left:813px;top:372px;width:8px;height:8px;border-top:1px solid #756a63;border-left:1px solid #756a63;border-right:1px solid #d6cfc8;border-bottom:1px solid #d6cfc8;box-sizing:border-box"></div>
<div class="a t" style="left:823px;top:366.8px;font-size:7.84px;color:#8e837b;transform:scaleX(0.893);transform-origin:0 50%;text-shadow:0.6px 0.6px #c8c0b8">Y</div>
<div class="a" style="left:650px;top:385.5px;width:73px;height:18.5px;background:#a89b93;border-top:1px solid #d6cfc8;border-left:1px solid #d6cfc8;border-right:1px solid #3a332e;border-bottom:1px solid #3a332e;box-shadow:inset -1px -1px #756a63;box-sizing:border-box;"></div>
<div class="a t" style="left:675px;top:384.8px;font-size:8.29px;color:#8e837b;transform:scaleX(0.893);transform-origin:0 50%;text-shadow:0.6px 0.6px #c8c0b8">Virtual array</div>
<div class="a" style="left:724px;top:385.5px;width:47px;height:18.5px;background:#a89b93;border-top:1px solid #d6cfc8;border-left:1px solid #d6cfc8;border-right:1px solid #3a332e;border-bottom:1px solid #3a332e;box-shadow:inset -1px -1px #756a63;box-sizing:border-box;"></div>
<div class="a t" style="left:724px;top:384.8px;font-size:8.29px;color:#8e837b;width:52.64px;text-align:center;transform:scaleX(0.893);transform-origin:0 50%;text-shadow:0.6px 0.6px #c8c0b8">Beshey...</div>
<div class="a" style="left:772px;top:385.5px;width:39px;height:18.5px;background:#a89b93;border-top:1px solid #d6cfc8;border-left:1px solid #d6cfc8;border-right:1px solid #3a332e;border-bottom:1px solid #3a332e;box-shadow:inset -1px -1px #756a63;box-sizing:border-box;"></div>
<div class="a t" style="left:772px;top:384.8px;font-size:8.29px;color:#8e837b;width:43.68px;text-align:center;transform:scaleX(0.893);transform-origin:0 50%;text-shadow:0.6px 0.6px #c8c0b8">Nesting</div>
<div class="a" style="left:813px;top:385.5px;width:23px;height:18.5px;background:#a89b93;border-top:1px solid #d6cfc8;border-left:1px solid #d6cfc8;border-right:1px solid #3a332e;border-bottom:1px solid #3a332e;box-shadow:inset -1px -1px #756a63;box-sizing:border-box;"></div>
<div class="a t" style="left:813px;top:384.8px;font-size:8.29px;color:#1a1a1a;width:25.76px;text-align:center;transform:scaleX(0.893);transform-origin:0 50%;">...</div>
<div class="a" style="left:641px;top:418.5px;width:195px;height:1px;background:#d6cfc8"></div>
<div class="a" style="left:641px;top:419.5px;width:195px;height:1px;background:#756a63"></div>
<div class="a" style="left:641px;top:421.5px;width:195px;height:1px;background:#d6cfc8"></div>
<div class="a" style="left:641px;top:422.5px;width:195px;height:1px;background:#756a63"></div>
<svg class="a" style="left:836.5px;top:417px;" width="8" height="8" viewBox="0 0 8 8"><path d="M1.5 1.5 L6.5 6.5 M6.5 1.5 L1.5 6.5" stroke="#111" stroke-width="1.4"/></svg>
<div class="a" style="left:640px;top:426px;width:204px;height:176px;border-top:1px solid #d6cfc8;border-right:1px solid #756a63;box-sizing:border-box"></div>
<div class="a" style="left:645px;top:431.5px;width:194px;height:103.5px;border:1px solid #756a63;box-shadow:1px 1px #d6cfc8, inset 1px 1px #d6cfc8;box-sizing:border-box"></div>
<div class="a" style="left:665px;top:426px;width:22px;height:10px;background:#a89b93"></div>
<div class="a t" style="left:667px;top:421.3px;font-size:8.29px;color:#1a1a1a;transform:scaleX(0.893);transform-origin:0 50%;">Work</div>
<div class="a" style="left:650px;top:437.8px;width:64px;height:15.199999999999989px;background:#a89b93;border-top:1px solid #d6cfc8;border-left:1px solid #d6cfc8;border-right:1px solid #3a332e;border-bottom:1px solid #3a332e;box-shadow:inset -1px -1px #756a63;box-sizing:border-box;"></div>
<div class="a t" style="left:672.5px;top:435.7px;font-size:8.29px;color:#1a1a1a;transform:scaleX(0.893);transform-origin:0 50%;">Start</div>
<div class="a" style="left:715.3px;top:437.8px;width:69.70000000000005px;height:15.199999999999989px;background:#a89b93;border-top:1px solid #d6cfc8;border-left:1px solid #d6cfc8;border-right:1px solid #3a332e;border-bottom:1px solid #3a332e;box-shadow:inset -1px -1px #756a63;box-sizing:border-box;"></div>
<div class="a t" style="left:715.3px;top:435.7px;font-size:8.29px;color:#1a1a1a;width:78.06px;text-align:center;transform:scaleX(0.893);transform-origin:0 50%;">Pause/Continue</div>
<div class="a" style="left:787px;top:437.8px;width:50px;height:15.199999999999989px;background:#a89b93;border-top:1px solid #d6cfc8;border-left:1px solid #d6cfc8;border-right:1px solid #3a332e;border-bottom:1px solid #3a332e;box-shadow:inset -1px -1px #756a63;box-sizing:border-box;"></div>
<div class="a t" style="left:787px;top:435.7px;font-size:8.29px;color:#1a1a1a;width:56.00px;text-align:center;transform:scaleX(0.893);transform-origin:0 50%;">Stop</div>
<div class="a" style="left:650px;top:455px;width:64px;height:15.5px;background:#a89b93;border-top:1px solid #d6cfc8;border-left:1px solid #d6cfc8;border-right:1px solid #3a332e;border-bottom:1px solid #3a332e;box-shadow:inset -1px -1px #756a63;box-sizing:border-box;"></div>
<div class="a t" style="left:660px;top:453.05px;font-size:8.29px;color:#1a1a1a;transform:scaleX(0.893);transform-origin:0 50%;">DownToUFile</div>
<div class="a" style="left:715.3px;top:455px;width:69.70000000000005px;height:15.5px;background:#a89b93;border-top:1px solid #d6cfc8;border-left:1px solid #d6cfc8;border-right:1px solid #3a332e;border-bottom:1px solid #3a332e;box-shadow:inset -1px -1px #756a63;box-sizing:border-box;"></div>
<div class="a t" style="left:715.3px;top:453.05px;font-size:8.29px;color:#1a1a1a;width:78.06px;text-align:center;transform:scaleX(0.893);transform-origin:0 50%;">UFileOutput</div>
<div class="a" style="left:787px;top:455px;width:50px;height:15.5px;background:#a89b93;border-top:1px solid #d6cfc8;border-left:1px solid #d6cfc8;border-right:1px solid #3a332e;border-bottom:1px solid #3a332e;box-shadow:inset -1px -1px #756a63;box-sizing:border-box;"></div>
<div class="a t" style="left:787px;top:453.05px;font-size:8.29px;color:#1a1a1a;width:56.00px;text-align:center;transform:scaleX(0.893);transform-origin:0 50%;">Download</div>
<div class="a t" style="left:686px;top:474.3px;font-size:8.29px;color:#1a1a1a;transform:scaleX(0.893);transform-origin:0 50%;">Position:</div>
<div class="a" style="left:718px;top:474.8px;width:120px;height:13.5px;background:#dad1cc;border-top:1px solid #756a63;border-left:1px solid #756a63;border-right:1px solid #d6cfc8;border-bottom:1px solid #d6cfc8;box-shadow:inset 1px 1px #3a332e;box-sizing:border-box;"></div>
<div class="a t" style="left:721px;top:471.8px;font-size:8.29px;color:#111;transform:scaleX(0.893);transform-origin:0 50%;">Current position</div>
<div class="a" style="left:828px;top:476.5px;width:9px;height:10.5px;background:#a89b93;border-top:1px solid #d6cfc8;border-left:1px solid #d6cfc8;border-right:1px solid #3a332e;border-bottom:1px solid #3a332e;box-shadow:inset -1px -1px #756a63;box-sizing:border-box;"></div>
<svg class="a" style="left:828px;top:476.5px;" width="9" height="10" viewBox="0 0 9 10"><path d="M2.5 4 H6.5 L4.5 6.5 Z" fill="#111"/></svg>
<div class="a t" style="left:681px;top:491.3px;font-size:8.29px;color:#1a1a1a;transform:scaleX(0.893);transform-origin:0 50%;">optimize</div>
<div class="a t" style="left:661.5px;top:502.3px;font-size:8.29px;color:#1a1a1a;transform:scaleX(0.893);transform-origin:0 50%;">Output select graphics</div>
<div class="a t" style="left:649px;top:514.3px;font-size:8.29px;color:#8e837b;transform:scaleX(0.893);transform-origin:0 50%;text-shadow:0.6px 0.6px #c8c0b8">Output selected graphics position</div>
<div class="a" style="left:787px;top:495.7px;width:50px;height:15.2px;background:#a89b93;border-top:1px solid #d6cfc8;border-left:1px solid #d6cfc8;border-right:1px solid #3a332e;border-bottom:1px solid #3a332e;box-shadow:inset -1px -1px #756a63;box-sizing:border-box;"></div>
<div class="a t" style="left:787px;top:493.6px;font-size:8.29px;color:#1a1a1a;width:56.00px;text-align:center;transform:scaleX(0.893);transform-origin:0 50%;">Cut scale</div>
<div class="a" style="left:787px;top:513.4px;width:50px;height:15.2px;background:#a89b93;border-top:1px solid #d6cfc8;border-left:1px solid #d6cfc8;border-right:1px solid #3a332e;border-bottom:1px solid #3a332e;box-shadow:inset -1px -1px #756a63;box-sizing:border-box;"></div>
<div class="a t" style="left:787px;top:511.3px;font-size:8.29px;color:#1a1a1a;width:56.00px;text-align:center;transform:scaleX(0.893);transform-origin:0 50%;">Go scale</div>
<div class="a" style="left:645px;top:541.3px;width:196px;height:26.5px;border:1px solid #756a63;box-shadow:1px 1px #d6cfc8, inset 1px 1px #d6cfc8;box-sizing:border-box"></div>
<div class="a" style="left:649px;top:536px;width:26px;height:10px;background:#a89b93"></div>
<div class="a t" style="left:650px;top:531.3px;font-size:8.29px;color:#1a1a1a;transform:scaleX(0.893);transform-origin:0 50%;">Device</div>
<div class="a" style="left:650px;top:548px;width:65px;height:15.5px;background:#a89b93;border-top:1px solid #d6cfc8;border-left:1px solid #d6cfc8;border-right:1px solid #3a332e;border-bottom:1px solid #3a332e;box-shadow:inset -1px -1px #756a63;box-sizing:border-box;"></div>
<div class="a t" style="left:650px;top:546.0px;font-size:8.29px;color:#1a1a1a;width:72.80px;text-align:center;transform:scaleX(0.893);transform-origin:0 50%;">Setting</div>
<div class="a" style="left:718px;top:550px;width:120px;height:13.5px;background:#dad1cc;border-top:1px solid #756a63;border-left:1px solid #756a63;border-right:1px solid #d6cfc8;border-bottom:1px solid #d6cfc8;box-shadow:inset 1px 1px #3a332e;box-sizing:border-box;"></div>
<div class="a t" style="left:721px;top:547.3px;font-size:8.29px;color:#111;transform:scaleX(0.893);transform-origin:0 50%;">Device---(USB:Auto)</div>
<div class="a" style="left:828px;top:551.5px;width:9px;height:10.5px;background:#a89b93;border-top:1px solid #d6cfc8;border-left:1px solid #d6cfc8;border-right:1px solid #3a332e;border-bottom:1px solid #3a332e;box-shadow:inset -1px -1px #756a63;box-sizing:border-box;"></div>
<svg class="a" style="left:828px;top:551.5px;" width="9" height="10" viewBox="0 0 9 10"><path d="M2.5 4 H6.5 L4.5 6.5 Z" fill="#111"/></svg>
<div class="a" style="left:640px;top:601px;width:208px;height:1px;background:#d6cfc8"></div>
<div class="a" style="left:2px;top:601px;width:846px;height:1px;background:#756a63"></div>
<div class="a" style="left:2px;top:602px;width:846px;height:1px;background:#d6cfc8"></div>
<svg class="a" style="left:4px;top:604px;" width="8" height="19" viewBox="0 0 8 19"><path d="M2 2 L6 6 M6 2 L2 6" stroke="#111" stroke-width="1.2"/><rect x="2.5" y="9" width="3" height="8" fill="none" stroke="#d8d0c8" stroke-width="0.8"/></svg>
<div class="a" style="left:17.4px;top:605.2px;width:15.3px;height:17.8px;background:#000000"></div>
<div class="a" style="left:35.3px;top:605.2px;width:15.3px;height:17.8px;background:#0a10f0"></div>
<div class="a" style="left:53.2px;top:605.2px;width:15.3px;height:17.8px;background:#f01010"></div>
<div class="a" style="left:71.0px;top:605.2px;width:15.3px;height:17.8px;background:#10f010"></div>
<div class="a" style="left:88.9px;top:605.2px;width:15.3px;height:17.8px;background:#f08070"></div>
<div class="a" style="left:106.8px;top:605.2px;width:15.3px;height:17.8px;background:#f8f000"></div>
<div class="a" style="left:124.7px;top:605.2px;width:15.3px;height:17.8px;background:#3090f0"></div>
<div class="a" style="left:142.6px;top:605.2px;width:15.3px;height:17.8px;background:#8a4018"></div>
<div class="a" style="left:160.4px;top:605.2px;width:15.3px;height:17.8px;background:#8a8a10"></div>
<div class="a" style="left:178.3px;top:605.2px;width:15.3px;height:17.8px;background:#108a68"></div>
<div class="a" style="left:196.2px;top:605.2px;width:15.3px;height:17.8px;background:#f84010"></div>
<div class="a" style="left:214.1px;top:605.2px;width:15.3px;height:17.8px;background:#400090"></div>
<div class="a" style="left:232.0px;top:605.2px;width:15.3px;height:17.8px;background:#ffd0d8"></div>
<div class="a" style="left:249.8px;top:605.2px;width:15.3px;height:17.8px;background:#a8a8f8"></div>
<div class="a" style="left:267.7px;top:605.2px;width:15.3px;height:17.8px;background:#d0f8a0"></div>
<div class="a" style="left:285.6px;top:605.2px;width:15.3px;height:17.8px;background:#f89050"></div>
<div class="a" style="left:303.5px;top:605.2px;width:15.3px;height:17.8px;background:#d87890"></div>
<div class="a" style="left:321.4px;top:605.2px;width:15.3px;height:17.8px;background:#8080e0"></div>
<div class="a" style="left:339.2px;top:605.2px;width:15.3px;height:17.8px;background:#70e070"></div>
<div class="a" style="left:357.1px;top:605.2px;width:15.3px;height:17.8px;background:#b0a070"></div>
<div class="a" style="left:2px;top:625px;width:846px;height:1px;background:#756a63"></div>
<div class="a" style="left:2px;top:626px;width:846px;height:1px;background:#d6cfc8"></div>
<div class="a" style="left:3px;top:627.5px;width:514px;height:12px;border-top:1px solid #756a63;border-left:1px solid #756a63;border-bottom:1px solid #d6cfc8;border-right:1px solid #d6cfc8;box-sizing:border-box"></div>
<div class="a" style="left:519px;top:627.5px;width:14px;height:12px;border-top:1px solid #756a63;border-left:1px solid #756a63;border-bottom:1px solid #d6cfc8;border-right:1px solid #d6cfc8;box-sizing:border-box"></div>
<div class="a" style="left:536px;top:627.5px;width:131px;height:12px;border-top:1px solid #756a63;border-left:1px solid #756a63;border-bottom:1px solid #d6cfc8;border-right:1px solid #d6cfc8;box-sizing:border-box"></div>
<div class="a" style="left:671px;top:627.5px;width:166px;height:12px;border-top:1px solid #756a63;border-left:1px solid #756a63;border-bottom:1px solid #d6cfc8;border-right:1px solid #d6cfc8;box-sizing:border-box"></div>
<div class="a t" style="left:6px;top:623.8px;font-size:8.18px;color:#222;transform:scaleX(0.893);transform-origin:0 50%;">— *Welcome to use the Laser system of cutting,Propose the display area 1024*768 or higher *—</div>
<div class="a t" style="left:539px;top:623.8px;font-size:8.29px;color:#222;transform:scaleX(0.893);transform-origin:0 50%;">General mode,Total count:0</div>
<div class="a t" style="left:676px;top:623.8px;font-size:8.18px;color:#222;transform:scaleX(0.893);transform-origin:0 50%;">644XG,X:937.391mm,Y:-90.841mm</div>
<svg class="a" style="left:838px;top:628px;" width="11" height="11" viewBox="0 0 11 11"><path d="M10 2 L2 10 M10 5 L5 10 M10 8 L8 10" stroke="#d8d0c8" stroke-width="0.9"/><path d="M10 3 L3 10 M10 6 L6 10 M10 9 L9 10" stroke="#6a5f58" stroke-width="0.9"/></svg>
<div class="a" style="left:30px;top:196px;width:648px;height:341px;background:#a89b93;border-top:1px solid #d8d0c8;border-left:1px solid #d8d0c8;border-right:1px solid #3a332e;border-bottom:1px solid #3a332e;box-shadow:inset -1px -1px #6a5f58, inset 1px 1px #b8aea6;box-sizing:border-box"></div>
<div class="a" style="left:32px;top:198px;width:644px;height:12px;background:linear-gradient(90deg,#4a4870 0%,#a8ccf2 100%)"></div>
<svg class="a" style="left:34px;top:199px;" width="11" height="10" viewBox="0 0 11 10"><path d="M5.5 0.5 L10.5 5 L8.5 9.5 H2.5 L0.5 5 Z" fill="#d01818"/><circle cx="5.5" cy="5.5" r="2" fill="#a00000"/></svg>
<div class="a t" style="left:47.5px;top:194.3px;font-size:8.3px;color:#ffffff;font-weight:bold;">Import</div>
<div class="a" style="left:662px;top:199px;width:12px;height:10px;background:#a89b93;border-top:1px solid #d6cfc8;border-left:1px solid #d6cfc8;border-right:1px solid #3a332e;border-bottom:1px solid #3a332e;box-shadow:inset -1px -1px #756a63;box-sizing:border-box;"></div>
<svg class="a" style="left:662px;top:199px;" width="12" height="10" viewBox="0 0 12 10"><path d="M3.5 2.5 L8.5 7.5 M8.5 2.5 L3.5 7.5" stroke="#111" stroke-width="1.4"/></svg>
<div class="a t" style="left:40px;top:212.8px;font-size:8.29px;color:#222;transform:scaleX(0.893);transform-origin:0 50%;">Папка:</div>
<div class="a" style="left:96px;top:215px;width:173px;height:16px;background:#dad1cc;border-top:1px solid #756a63;border-left:1px solid #756a63;border-right:1px solid #d6cfc8;border-bottom:1px solid #d6cfc8;box-shadow:inset 1px 1px #3a332e;box-sizing:border-box;"></div>
<svg class="a" style="left:100px;top:217px;" width="10" height="12" viewBox="0 0 10 12"><path d="M1 2 H4 L5 3 H9 V11 H1 Z" fill="#e8c840"/><path d="M1 4 H9 V11 H1 Z" fill="#f8e070"/></svg>
<div class="a t" style="left:114px;top:213.3px;font-size:8.29px;color:#111;transform:scaleX(0.893);transform-origin:0 50%;">Screenshots</div>
<div class="a" style="left:259px;top:217px;width:9px;height:12px;background:#a89b93;border-top:1px solid #d6cfc8;border-left:1px solid #d6cfc8;border-right:1px solid #3a332e;border-bottom:1px solid #3a332e;box-shadow:inset -1px -1px #756a63;box-sizing:border-box;"></div>
<svg class="a" style="left:259px;top:217px;" width="9" height="12" viewBox="0 0 9 12"><path d="M2.5 5 H6.5 L4.5 7.5 Z" fill="#111"/></svg>
<svg class="a" style="left:277px;top:218px;" width="10" height="10" viewBox="0 0 10 10"><path d="M9 5 H3 M5.5 2 L2.5 5 L5.5 8" stroke="#8a8078" stroke-width="1.5" fill="none"/></svg>
<svg class="a" style="left:291px;top:217px;" width="13" height="12" viewBox="0 0 13 12"><path d="M0.5 2 H5 L6 3 H12 V11 H0.5 Z" fill="#e8d030" stroke="#706010" stroke-width="0.8"/><path d="M6.5 9 V5 M4.5 7 L6.5 5 L8.5 7 M6.5 5 H10" stroke="#111" stroke-width="1" fill="none"/></svg>
<svg class="a" style="left:308px;top:216px;" width="14" height="13" viewBox="0 0 14 13"><path d="M0.5 4 H5 L6 5 H11 V12 H0.5 Z" fill="#e8d030" stroke="#706010" stroke-width="0.8"/><path d="M11 0 V4 M9 2 H13 M9.5 0.5 L12.5 3.5 M12.5 0.5 L9.5 3.5" stroke="#222" stroke-width="0.6"/></svg>
<svg class="a" style="left:324px;top:217px;" width="19" height="12" viewBox="0 0 19 12"><rect x="0.5" y="0.5" width="12" height="10" fill="#f4f4f4" stroke="#333" stroke-width="0.9"/><path d="M2 3 H5 M6 3 H11 M2 5.5 H5 M6 5.5 H11 M2 8 H5 M6 8 H11" stroke="#333" stroke-width="1"/><rect x="0.5" y="0.5" width="12" height="2" fill="#3060a0"/><path d="M14.5 5 H18 L16.25 7 Z" fill="#111"/></svg>
<div class="a" style="left:347px;top:216px;width:1px;height:15px;background:#756a63"></div>
<div class="a" style="left:348px;top:216px;width:1px;height:15px;background:#d6cfc8"></div>
<svg class="a" style="left:351px;top:216px;" width="17" height="15" viewBox="0 0 17 15"><circle cx="7" cy="8" r="6" fill="#e8ecf4" stroke="#9098b0" stroke-width="0.8"/><path d="M7 4.5 V11.5 M3.5 8 H10.5" stroke="#d02030" stroke-width="1.6"/><path d="M13.5 6 H17 L15.25 8 Z" fill="#111"/></svg>
<div class="a" style="left:34.5px;top:233.5px;width:398.5px;height:261px;background:#dad1cc;border-top:1px solid #9a8e86;border-left:1px solid #8a7e76;border-right:1px solid #e0d8d2;border-bottom:1px solid #6a5f58;box-sizing:border-box"></div>
<svg class="a" style="left:38px;top:238px;" width="10" height="11" viewBox="0 0 10 11"><path d="M1 1 H4 L5 2 V10 H1 Z" fill="#c8a030"/><path d="M2.5 2.5 H9 V10 H1.5 Z" fill="#f0d868"/><path d="M2.5 2.5 H9 V4 H2.5 Z" fill="#f8ec9a"/></svg>
<div class="a t" style="left:50px;top:233.9px;font-size:8.29px;color:#1a1a1a;transform:scaleX(0.893);transform-origin:0 50%;">Компы</div>
<svg class="a" style="left:38px;top:250px;" width="10" height="11" viewBox="0 0 10 11"><path d="M1 1 H4 L5 2 V10 H1 Z" fill="#c8a030"/><path d="M2.5 2.5 H9 V10 H1.5 Z" fill="#f0d868"/><path d="M2.5 2.5 H9 V4 H2.5 Z" fill="#f8ec9a"/></svg>
<div class="a t" style="left:50px;top:245.79000000000002px;font-size:8.29px;color:#1a1a1a;transform:scaleX(0.893);transform-origin:0 50%;">Котики</div>
<svg class="a" style="left:38px;top:262px;" width="10" height="11" viewBox="0 0 10 11"><path d="M1 1 H4 L5 2 V10 H1 Z" fill="#c8a030"/><path d="M2.5 2.5 H9 V10 H1.5 Z" fill="#f0d868"/><path d="M2.5 2.5 H9 V4 H2.5 Z" fill="#f8ec9a"/></svg>
<div class="a t" style="left:50px;top:257.68px;font-size:8.29px;color:#1a1a1a;transform:scaleX(0.893);transform-origin:0 50%;">innounp049src</div>
<svg class="a" style="left:38px;top:274px;" width="10" height="11" viewBox="0 0 10 11"><path d="M1 1 H4 L5 2 V10 H1 Z" fill="#c8a030"/><path d="M2.5 2.5 H9 V10 H1.5 Z" fill="#f0d868"/><path d="M2.5 2.5 H9 V4 H2.5 Z" fill="#f8ec9a"/></svg>
<div class="a t" style="left:50px;top:269.57px;font-size:8.29px;color:#1a1a1a;transform:scaleX(0.893);transform-origin:0 50%;">innounp049</div>
<svg class="a" style="left:38px;top:286px;" width="10" height="11" viewBox="0 0 10 11"><path d="M1 1 H4 L5 2 V10 H1 Z" fill="#c8a030"/><path d="M2.5 2.5 H9 V10 H1.5 Z" fill="#f0d868"/><path d="M2.5 2.5 H9 V4 H2.5 Z" fill="#f8ec9a"/></svg>
<div class="a t" style="left:50px;top:281.46px;font-size:8.29px;color:#1a1a1a;transform:scaleX(0.893);transform-origin:0 50%;">UK-02B-OP</div>
<svg class="a" style="left:38px;top:298px;" width="10" height="11" viewBox="0 0 10 11"><path d="M1 1 H4 L5 2 V10 H1 Z" fill="#c8a030"/><path d="M2.5 2.5 H9 V10 H1.5 Z" fill="#f0d868"/><path d="M2.5 2.5 H9 V4 H2.5 Z" fill="#f8ec9a"/></svg>
<div class="a t" style="left:50px;top:293.35px;font-size:8.29px;color:#1a1a1a;transform:scaleX(0.893);transform-origin:0 50%;">Как исправить ошибку api-ms-win-crt-runtime-l1-1-0</div>
<svg class="a" style="left:38px;top:309px;" width="10" height="11" viewBox="0 0 10 11"><path d="M1 1 H4 L5 2 V10 H1 Z" fill="#c8a030"/><path d="M2.5 2.5 H9 V10 H1.5 Z" fill="#f0d868"/><path d="M2.5 2.5 H9 V4 H2.5 Z" fill="#f8ec9a"/></svg>
<div class="a t" style="left:50px;top:305.24px;font-size:8.29px;color:#1a1a1a;transform:scaleX(0.893);transform-origin:0 50%;">Новая папка</div>
<svg class="a" style="left:38px;top:321px;" width="10" height="11" viewBox="0 0 10 11"><path d="M1 1 H4 L5 2 V10 H1 Z" fill="#c8a030"/><path d="M2.5 2.5 H9 V10 H1.5 Z" fill="#f0d868"/><path d="M2.5 2.5 H9 V4 H2.5 Z" fill="#f8ec9a"/></svg>
<div class="a t" style="left:50px;top:317.13px;font-size:8.29px;color:#1a1a1a;transform:scaleX(0.893);transform-origin:0 50%;">Темы рабочего стола</div>
<svg class="a" style="left:38px;top:333px;" width="10" height="11" viewBox="0 0 10 11"><path d="M1 1 H4 L5 2 V10 H1 Z" fill="#c8a030"/><path d="M2.5 2.5 H9 V10 H1.5 Z" fill="#f0d868"/><path d="M2.5 2.5 H9 V4 H2.5 Z" fill="#f8ec9a"/></svg>
<div class="a t" style="left:50px;top:329.02000000000004px;font-size:8.29px;color:#1a1a1a;transform:scaleX(0.893);transform-origin:0 50%;">spider_xp</div>
<svg class="a" style="left:38px;top:345px;" width="10" height="11" viewBox="0 0 10 11"><path d="M1 1 H4 L5 2 V10 H1 Z" fill="#c8a030"/><path d="M2.5 2.5 H9 V10 H1.5 Z" fill="#f0d868"/><path d="M2.5 2.5 H9 V4 H2.5 Z" fill="#f8ec9a"/></svg>
<div class="a t" style="left:50px;top:340.91px;font-size:8.29px;color:#1a1a1a;transform:scaleX(0.893);transform-origin:0 50%;">Беляев</div>
<svg class="a" style="left:38px;top:357px;" width="10" height="11" viewBox="0 0 10 11"><path d="M1 1 H4 L5 2 V10 H1 Z" fill="#c8a030"/><path d="M2.5 2.5 H9 V10 H1.5 Z" fill="#f0d868"/><path d="M2.5 2.5 H9 V4 H2.5 Z" fill="#f8ec9a"/></svg>
<div class="a t" style="left:50px;top:352.8px;font-size:8.29px;color:#1a1a1a;transform:scaleX(0.893);transform-origin:0 50%;">14.3.2.1</div>
<svg class="a" style="left:38px;top:369px;" width="11" height="11" viewBox="0 0 11 11"><rect x="1.5" y="0.5" width="8" height="10" fill="#f4f4ec" stroke="#8a8a80" stroke-width="0.6"/><circle cx="5.5" cy="5.5" r="2.6" fill="#2a4a3a"/><circle cx="5" cy="5" r="1" fill="#a0d0b0"/></svg>
<div class="a" style="left:49px;top:368.78999999999996px;width:31.5px;height:11.6px;background:#168a8a"></div>
<div class="a" style="left:37px;top:369px;width:11px;height:11px;background:rgba(20,140,140,0.45)"></div>
<div class="a t" style="left:50px;top:364.69px;font-size:8.29px;color:#f0f8f8;transform:scaleX(0.893);transform-origin:0 50%;">Test-1.ai</div>
<svg class="a" style="left:37px;top:381px;" width="12" height="11" viewBox="0 0 12 11"><rect x="3" y="0.5" width="8" height="10" fill="#f8f8f8" stroke="#8a8a9a" stroke-width="0.6"/><rect x="0.5" y="3" width="9" height="5" fill="#a040c0"/><text x="5" y="7.2" font-size="4" font-family="Liberation Sans" font-weight="bold" fill="#fff" text-anchor="middle">PNG</text></svg>
<div class="a t" style="left:50px;top:376.58px;font-size:8.29px;color:#1a1a1a;transform:scaleX(0.893);transform-origin:0 50%;">2020-05-24_081831.png</div>
<svg class="a" style="left:37px;top:393px;" width="12" height="11" viewBox="0 0 12 11"><rect x="3" y="0.5" width="8" height="10" fill="#f8f8f8" stroke="#8a8a9a" stroke-width="0.6"/><rect x="0.5" y="3" width="9" height="5" fill="#a040c0"/><text x="5" y="7.2" font-size="4" font-family="Liberation Sans" font-weight="bold" fill="#fff" text-anchor="middle">PNG</text></svg>
<div class="a t" style="left:50px;top:388.46999999999997px;font-size:8.29px;color:#1a1a1a;transform:scaleX(0.893);transform-origin:0 50%;">2020-05-24_081248.png</div>
<svg class="a" style="left:37px;top:405px;" width="12" height="11" viewBox="0 0 12 11"><rect x="3" y="0.5" width="8" height="10" fill="#f8f8f8" stroke="#8a8a9a" stroke-width="0.6"/><rect x="0.5" y="3" width="9" height="5" fill="#a040c0"/><text x="5" y="7.2" font-size="4" font-family="Liberation Sans" font-weight="bold" fill="#fff" text-anchor="middle">PNG</text></svg>
<div class="a t" style="left:50px;top:400.36px;font-size:8.29px;color:#1a1a1a;transform:scaleX(0.893);transform-origin:0 50%;">2020-05-24_081145.png</div>
<svg class="a" style="left:37px;top:416px;" width="12" height="11" viewBox="0 0 12 11"><rect x="3" y="0.5" width="8" height="10" fill="#f8f8f8" stroke="#8a8a9a" stroke-width="0.6"/><rect x="0.5" y="3" width="9" height="5" fill="#a040c0"/><text x="5" y="7.2" font-size="4" font-family="Liberation Sans" font-weight="bold" fill="#fff" text-anchor="middle">PNG</text></svg>
<div class="a t" style="left:50px;top:412.25000000000006px;font-size:8.29px;color:#1a1a1a;transform:scaleX(0.893);transform-origin:0 50%;">2020-05-24_080952.png</div>
<svg class="a" style="left:37px;top:428px;" width="12" height="11" viewBox="0 0 12 11"><rect x="3" y="0.5" width="8" height="10" fill="#f8f8f8" stroke="#8a8a9a" stroke-width="0.6"/><rect x="0.5" y="3" width="9" height="5" fill="#a040c0"/><text x="5" y="7.2" font-size="4" font-family="Liberation Sans" font-weight="bold" fill="#fff" text-anchor="middle">PNG</text></svg>
<div class="a t" style="left:50px;top:424.14000000000004px;font-size:8.29px;color:#1a1a1a;transform:scaleX(0.893);transform-origin:0 50%;">2020-05-23_203828.png</div>
<svg class="a" style="left:37px;top:440px;" width="12" height="11" viewBox="0 0 12 11"><rect x="3" y="0.5" width="8" height="10" fill="#f8f8f8" stroke="#8a8a9a" stroke-width="0.6"/><rect x="0.5" y="3" width="9" height="5" fill="#a040c0"/><text x="5" y="7.2" font-size="4" font-family="Liberation Sans" font-weight="bold" fill="#fff" text-anchor="middle">PNG</text></svg>
<div class="a t" style="left:50px;top:436.03000000000003px;font-size:8.29px;color:#1a1a1a;transform:scaleX(0.893);transform-origin:0 50%;">2020-05-20_230206.png</div>
<svg class="a" style="left:37px;top:452px;" width="12" height="11" viewBox="0 0 12 11"><rect x="3" y="0.5" width="8" height="10" fill="#f8f8f8" stroke="#8a8a9a" stroke-width="0.6"/><rect x="0.5" y="3" width="9" height="5" fill="#a040c0"/><text x="5" y="7.2" font-size="4" font-family="Liberation Sans" font-weight="bold" fill="#fff" text-anchor="middle">PNG</text></svg>
<div class="a t" style="left:50px;top:447.92px;font-size:8.29px;color:#1a1a1a;transform:scaleX(0.893);transform-origin:0 50%;">2020-05-20_213727.png</div>
<svg class="a" style="left:38px;top:464px;" width="11" height="11" viewBox="0 0 11 11"><rect x="1.5" y="0.5" width="8" height="10" fill="#f4f4ec" stroke="#8a8a80" stroke-width="0.6"/><circle cx="5.5" cy="5.5" r="2.6" fill="#2a4a3a"/><circle cx="5" cy="5" r="1" fill="#a0d0b0"/></svg>
<div class="a t" style="left:50px;top:459.81px;font-size:8.29px;color:#1a1a1a;transform:scaleX(0.893);transform-origin:0 50%;">Lev_A4.ai</div>
<svg class="a" style="left:345px;top:238px;" width="12" height="11" viewBox="0 0 12 11"><rect x="3" y="0.5" width="8" height="10" fill="#f8f8f8" stroke="#8a8a9a" stroke-width="0.6"/><rect x="0.5" y="3" width="9" height="5" fill="#a040c0"/><text x="5" y="7.2" font-size="4" font-family="Liberation Sans" font-weight="bold" fill="#fff" text-anchor="middle">PNG</text></svg>
<div class="a t" style="left:358px;top:233.9px;font-size:8.29px;color:#1a1a1a;transform:scaleX(0.893);transform-origin:0 50%;width:83px;overflow:hidden">2020-05-20_073354.png</div>
<svg class="a" style="left:345px;top:250px;" width="12" height="11" viewBox="0 0 12 11"><rect x="3" y="0.5" width="8" height="10" fill="#f8f8f8" stroke="#8a8a9a" stroke-width="0.6"/><rect x="0.5" y="3" width="9" height="5" fill="#a040c0"/><text x="5" y="7.2" font-size="4" font-family="Liberation Sans" font-weight="bold" fill="#fff" text-anchor="middle">PNG</text></svg>
<div class="a t" style="left:358px;top:245.79000000000002px;font-size:8.29px;color:#1a1a1a;transform:scaleX(0.893);transform-origin:0 50%;width:83px;overflow:hidden">2020-05-18_232105.png</div>
<svg class="a" style="left:345px;top:262px;" width="12" height="11" viewBox="0 0 12 11"><rect x="3" y="0.5" width="8" height="10" fill="#f8f8f8" stroke="#8a8a9a" stroke-width="0.6"/><rect x="0.5" y="3" width="9" height="5" fill="#a040c0"/><text x="5" y="7.2" font-size="4" font-family="Liberation Sans" font-weight="bold" fill="#fff" text-anchor="middle">PNG</text></svg>
<div class="a t" style="left:358px;top:257.68px;font-size:8.29px;color:#1a1a1a;transform:scaleX(0.893);transform-origin:0 50%;width:83px;overflow:hidden">2020-05-18_231920.png</div>
<svg class="a" style="left:345px;top:274px;" width="12" height="11" viewBox="0 0 12 11"><rect x="3" y="0.5" width="8" height="10" fill="#f8f8f8" stroke="#8a8a9a" stroke-width="0.6"/><rect x="0.5" y="3" width="9" height="5" fill="#a040c0"/><text x="5" y="7.2" font-size="4" font-family="Liberation Sans" font-weight="bold" fill="#fff" text-anchor="middle">PNG</text></svg>
<div class="a t" style="left:358px;top:269.57px;font-size:8.29px;color:#1a1a1a;transform:scaleX(0.893);transform-origin:0 50%;width:83px;overflow:hidden">2020-05-18_215310.png</div>
<svg class="a" style="left:345px;top:286px;" width="12" height="11" viewBox="0 0 12 11"><rect x="3" y="0.5" width="8" height="10" fill="#f8f8f8" stroke="#8a8a9a" stroke-width="0.6"/><rect x="0.5" y="3" width="9" height="5" fill="#a040c0"/><text x="5" y="7.2" font-size="4" font-family="Liberation Sans" font-weight="bold" fill="#fff" text-anchor="middle">PNG</text></svg>
<div class="a t" style="left:358px;top:281.46px;font-size:8.29px;color:#1a1a1a;transform:scaleX(0.893);transform-origin:0 50%;width:83px;overflow:hidden">2020-05-18_205249.png</div>
<svg class="a" style="left:345px;top:298px;" width="12" height="11" viewBox="0 0 12 11"><rect x="3" y="0.5" width="8" height="10" fill="#f8f8f8" stroke="#8a8a9a" stroke-width="0.6"/><rect x="0.5" y="3" width="9" height="5" fill="#a040c0"/><text x="5" y="7.2" font-size="4" font-family="Liberation Sans" font-weight="bold" fill="#fff" text-anchor="middle">PNG</text></svg>
<div class="a t" style="left:358px;top:293.35px;font-size:8.29px;color:#1a1a1a;transform:scaleX(0.893);transform-origin:0 50%;width:83px;overflow:hidden">2020-05-18_204839.png</div>
<svg class="a" style="left:345px;top:309px;" width="12" height="11" viewBox="0 0 12 11"><rect x="3" y="0.5" width="8" height="10" fill="#f8f8f8" stroke="#8a8a9a" stroke-width="0.6"/><rect x="0.5" y="3" width="9" height="5" fill="#d03030"/><text x="5" y="7.2" font-size="4" font-family="Liberation Sans" font-weight="bold" fill="#fff" text-anchor="middle">JPG</text></svg>
<div class="a t" style="left:358px;top:305.24px;font-size:8.29px;color:#1a1a1a;transform:scaleX(0.893);transform-origin:0 50%;width:83px;overflow:hidden">1skbw5tdtrth3im_e108.jpg</div>
<svg class="a" style="left:345px;top:321px;" width="12" height="11" viewBox="0 0 12 11"><rect x="3" y="0.5" width="8" height="10" fill="#f8f8f8" stroke="#8a8a9a" stroke-width="0.6"/><rect x="0.5" y="3" width="9" height="5" fill="#d03030"/><text x="5" y="7.2" font-size="4" font-family="Liberation Sans" font-weight="bold" fill="#fff" text-anchor="middle">JPG</text></svg>
<div class="a t" style="left:358px;top:317.13px;font-size:8.29px;color:#1a1a1a;transform:scaleX(0.893);transform-origin:0 50%;width:83px;overflow:hidden">1skbw5tdtrth3im_e108.jpg</div>
<svg class="a" style="left:345px;top:333px;" width="12" height="11" viewBox="0 0 12 11"><rect x="3" y="0.5" width="8" height="10" fill="#f8f8f8" stroke="#8a8a9a" stroke-width="0.6"/><rect x="0.5" y="3" width="9" height="5" fill="#d03030"/><text x="5" y="7.2" font-size="4" font-family="Liberation Sans" font-weight="bold" fill="#fff" text-anchor="middle">JPG</text></svg>
<div class="a t" style="left:358px;top:329.02000000000004px;font-size:8.29px;color:#1a1a1a;transform:scaleX(0.893);transform-origin:0 50%;width:83px;overflow:hidden">qv4cv3mall0us1k_4a0.jpg</div>
<svg class="a" style="left:345px;top:345px;" width="12" height="11" viewBox="0 0 12 11"><rect x="3" y="0.5" width="8" height="10" fill="#f8f8f8" stroke="#8a8a9a" stroke-width="0.6"/><rect x="0.5" y="3" width="9" height="5" fill="#d03030"/><text x="5" y="7.2" font-size="4" font-family="Liberation Sans" font-weight="bold" fill="#fff" text-anchor="middle">JPG</text></svg>
<div class="a t" style="left:358px;top:340.91px;font-size:8.29px;color:#1a1a1a;transform:scaleX(0.893);transform-origin:0 50%;width:83px;overflow:hidden">qv4cv3mall0us1k_4a0.jpg</div>
<svg class="a" style="left:345px;top:357px;" width="12" height="11" viewBox="0 0 12 11"><rect x="3" y="0.5" width="8" height="10" fill="#f8f8f8" stroke="#8a8a9a" stroke-width="0.6"/><rect x="0.5" y="3" width="9" height="5" fill="#d03030"/><text x="5" y="7.2" font-size="4" font-family="Liberation Sans" font-weight="bold" fill="#fff" text-anchor="middle">JPG</text></svg>
<div class="a t" style="left:358px;top:352.8px;font-size:8.29px;color:#1a1a1a;transform:scaleX(0.893);transform-origin:0 50%;width:83px;overflow:hidden">4h8vudm4gw1f7fb_72.jpg</div>
<svg class="a" style="left:345px;top:369px;" width="12" height="11" viewBox="0 0 12 11"><rect x="3" y="0.5" width="8" height="10" fill="#f8f8f8" stroke="#8a8a9a" stroke-width="0.6"/><rect x="0.5" y="3" width="9" height="5" fill="#d03030"/><text x="5" y="7.2" font-size="4" font-family="Liberation Sans" font-weight="bold" fill="#fff" text-anchor="middle">JPG</text></svg>
<div class="a t" style="left:358px;top:364.69px;font-size:8.29px;color:#1a1a1a;transform:scaleX(0.893);transform-origin:0 50%;width:83px;overflow:hidden">4h8vudm4gw1f7fb_72.jpg</div>
<svg class="a" style="left:345px;top:381px;" width="12" height="11" viewBox="0 0 12 11"><rect x="3" y="0.5" width="8" height="10" fill="#f8f8f8" stroke="#8a8a9a" stroke-width="0.6"/><rect x="0.5" y="3" width="9" height="5" fill="#a040c0"/><text x="5" y="7.2" font-size="4" font-family="Liberation Sans" font-weight="bold" fill="#fff" text-anchor="middle">PNG</text></svg>
<div class="a t" style="left:358px;top:376.58px;font-size:8.29px;color:#1a1a1a;transform:scaleX(0.893);transform-origin:0 50%;width:83px;overflow:hidden">2020-05-17_213647.png</div>
<svg class="a" style="left:345px;top:393px;" width="12" height="11" viewBox="0 0 12 11"><rect x="3" y="0.5" width="8" height="10" fill="#f8f8f8" stroke="#8a8a9a" stroke-width="0.6"/><rect x="0.5" y="3" width="9" height="5" fill="#a040c0"/><text x="5" y="7.2" font-size="4" font-family="Liberation Sans" font-weight="bold" fill="#fff" text-anchor="middle">PNG</text></svg>
<div class="a t" style="left:358px;top:388.46999999999997px;font-size:8.29px;color:#1a1a1a;transform:scaleX(0.893);transform-origin:0 50%;width:83px;overflow:hidden">2020-05-17_213545.png</div>
<svg class="a" style="left:345px;top:405px;" width="12" height="11" viewBox="0 0 12 11"><rect x="3" y="0.5" width="8" height="10" fill="#f8f8f8" stroke="#8a8a9a" stroke-width="0.6"/><rect x="0.5" y="3" width="9" height="5" fill="#a040c0"/><text x="5" y="7.2" font-size="4" font-family="Liberation Sans" font-weight="bold" fill="#fff" text-anchor="middle">PNG</text></svg>
<div class="a t" style="left:358px;top:400.36px;font-size:8.29px;color:#1a1a1a;transform:scaleX(0.893);transform-origin:0 50%;width:83px;overflow:hidden">2020-05-17_213228.png</div>
<svg class="a" style="left:345px;top:416px;" width="12" height="11" viewBox="0 0 12 11"><rect x="3" y="0.5" width="8" height="10" fill="#f8f8f8" stroke="#8a8a9a" stroke-width="0.6"/><rect x="0.5" y="3" width="9" height="5" fill="#a040c0"/><text x="5" y="7.2" font-size="4" font-family="Liberation Sans" font-weight="bold" fill="#fff" text-anchor="middle">PNG</text></svg>
<div class="a t" style="left:358px;top:412.25000000000006px;font-size:8.29px;color:#1a1a1a;transform:scaleX(0.893);transform-origin:0 50%;width:83px;overflow:hidden">2020-05-17_213134.png</div>
<svg class="a" style="left:345px;top:428px;" width="12" height="11" viewBox="0 0 12 11"><rect x="3" y="0.5" width="8" height="10" fill="#f8f8f8" stroke="#8a8a9a" stroke-width="0.6"/><rect x="0.5" y="3" width="9" height="5" fill="#a040c0"/><text x="5" y="7.2" font-size="4" font-family="Liberation Sans" font-weight="bold" fill="#fff" text-anchor="middle">PNG</text></svg>
<div class="a t" style="left:358px;top:424.14000000000004px;font-size:8.29px;color:#1a1a1a;transform:scaleX(0.893);transform-origin:0 50%;width:83px;overflow:hidden">2020-05-17_213017.png</div>
<svg class="a" style="left:345px;top:440px;" width="12" height="11" viewBox="0 0 12 11"><rect x="3" y="0.5" width="8" height="10" fill="#f8f8f8" stroke="#8a8a9a" stroke-width="0.6"/><rect x="0.5" y="3" width="9" height="5" fill="#d03030"/><text x="5" y="7.2" font-size="4" font-family="Liberation Sans" font-weight="bold" fill="#fff" text-anchor="middle">JPG</text></svg>
<div class="a t" style="left:358px;top:436.03000000000003px;font-size:8.29px;color:#1a1a1a;transform:scaleX(0.893);transform-origin:0 50%;width:83px;overflow:hidden">7UPSEajmHLs.jpg</div>
<svg class="a" style="left:345px;top:452px;" width="12" height="11" viewBox="0 0 12 11"><rect x="3" y="0.5" width="8" height="10" fill="#f8f8f8" stroke="#8a8a9a" stroke-width="0.6"/><rect x="0.5" y="3" width="9" height="5" fill="#d03030"/><text x="5" y="7.2" font-size="4" font-family="Liberation Sans" font-weight="bold" fill="#fff" text-anchor="middle">JPG</text></svg>
<div class="a t" style="left:358px;top:447.92px;font-size:8.29px;color:#1a1a1a;transform:scaleX(0.893);transform-origin:0 50%;width:83px;overflow:hidden">-Hom-079027013037-l.jpg</div>
<svg class="a" style="left:345px;top:464px;" width="12" height="11" viewBox="0 0 12 11"><rect x="3" y="0.5" width="8" height="10" fill="#f8f8f8" stroke="#8a8a9a" stroke-width="0.6"/><rect x="0.5" y="3" width="9" height="5" fill="#3090d0"/><text x="5" y="7.2" font-size="4" font-family="Liberation Sans" font-weight="bold" fill="#fff" text-anchor="middle">GIF</text></svg>
<div class="a t" style="left:358px;top:459.81px;font-size:8.29px;color:#1a1a1a;transform:scaleX(0.893);transform-origin:0 50%;width:83px;overflow:hidden">unnamed.gif</div>
<div class="a" style="left:36px;top:484px;width:396px;height:9px;background:#d8d0c8"></div>
<div class="a" style="left:36px;top:484px;width:11px;height:9px;background:#a89b93;border-top:1px solid #d6cfc8;border-left:1px solid #d6cfc8;border-right:1px solid #3a332e;border-bottom:1px solid #3a332e;box-shadow:inset -1px -1px #756a63;box-sizing:border-box;"></div>
<svg class="a" style="left:36px;top:484px;" width="11" height="9" viewBox="0 0 11 9"><path d="M6.5 2.5 V6.5 L4.5 4.5 Z" fill="#111"/></svg>
<div class="a" style="left:47px;top:484px;width:3px;height:9px;background:#a89b93;border-top:1px solid #d6cfc8;border-left:1px solid #d6cfc8;border-right:1px solid #3a332e;border-bottom:1px solid #3a332e;box-shadow:inset -1px -1px #756a63;box-sizing:border-box;"></div>
<div class="a" style="left:422px;top:484px;width:10px;height:9px;background:#a89b93;border-top:1px solid #d6cfc8;border-left:1px solid #d6cfc8;border-right:1px solid #3a332e;border-bottom:1px solid #3a332e;box-shadow:inset -1px -1px #756a63;box-sizing:border-box;"></div>
<svg class="a" style="left:422px;top:484px;" width="10" height="9" viewBox="0 0 10 9"><path d="M4.5 2.5 V6.5 L6.5 4.5 Z" fill="#111"/></svg>
<div class="a" style="left:434.5px;top:234.5px;width:230px;height:217.5px;background:#000"></div>
<div class="a" style="left:497.5px;top:234.5px;width:97.5px;height:89px;background:#fff"></div>
<svg class="a" style="left:497.5px;top:234.5px;" width="98" height="89" viewBox="0 0 98 89"><defs>
<radialGradient id="armg" cx="0.45" cy="0.3" r="0.7"><stop offset="0" stop-color="#f6f6f6"/><stop offset="0.6" stop-color="#c4c4c4"/><stop offset="1" stop-color="#808080"/></radialGradient>
<linearGradient id="forg" x1="0" y1="0" x2="0" y2="1"><stop offset="0" stop-color="#e8e8e8"/><stop offset="1" stop-color="#8c8c8c"/></linearGradient>
<path id="arc" d="M 7 34.5 A 60.8 60.8 0 0 1 91.5 34.5"/>
</defs>
<path d="M10 76 C8 66 10 50 17 39 C23 30 33 25 42 25 C46 25 48 27 49 28 C51 26 55 24.5 60 24.5 C70 24.5 80 30 85 40 C90 50 91 64 90 74 C89 78 86 79.5 80 79.5 C70 79 58 75 50 69.5 C42 75 28 79.5 18 79.5 C13 79.5 10.5 78 10 76 Z" fill="url(#armg)" stroke="#141414" stroke-width="1.4"/>
<path d="M11 64 C25 56 38 53 50 52.5 C62 52 74 53 89.5 58 L90 74 C89 78 86 79.5 80 79.5 C70 79 58 75 50 69.5 C42 75 28 79.5 18 79.5 C13 79.5 10.5 78 10 76 Z" fill="url(#forg)"/>
<path d="M10 76 C13 79.5 18 79.5 18 79.5 C28 79.5 42 75 50 69.5 C58 75 70 79 80 79.5 C86 79.5 89 78 90 74" fill="none" stroke="#141414" stroke-width="1.4"/>
<path d="M49 28 C48.5 38 49 46 49 52.5" stroke="#1a1a1a" stroke-width="1.3" fill="none"/>
<path d="M13 63 C25 56 38 53 50 52.5 C62 52 74 53 88 57.5" stroke="#141414" stroke-width="1.9" fill="none"/>
<path d="M22 61 C34 64 44 67.5 50 69.5 M78 61 C66 64 56 67.5 50 69.5" stroke="#3a3a3a" stroke-width="0.9" fill="none"/>
<path d="M67 46.5 L80 50 M68 50 L81 53.5 M69 53 L79 56 M36 45 L37 54" stroke="#1a1a1a" stroke-width="1.1" fill="none"/>
<path d="M21 40 C19 45 18.5 49 19 53 M60 30 C66 31 72 34 76 38" stroke="#fff" stroke-width="1.6" fill="none" opacity="0.8"/>
<text font-family="Liberation Sans" font-weight="bold" font-size="10.5" fill="#2a2a2a" stroke="#111" stroke-width="0.25"><textPath href="#arc" textLength="90" lengthAdjust="spacingAndGlyphs">ЗОЛОТЫЕ РУКИ</textPath></text>
</svg>
<svg class="a" style="left:434.5px;top:234.5px;" width="230" height="217.5" viewBox="0 0 230 217.5"><defs><clipPath id="cout"><path clip-rule="evenodd" d="M0 0 H230 V217.5 H0 Z M63 0 H160.5 V89 H63 Z"/></clipPath><clipPath id="cin"><rect x="63" y="0" width="97.5" height="89"/></clipPath></defs><g clip-path="url(#cout)"><ellipse cx="115.9" cy="136.2" rx="97.1" ry="79.3" fill="none" stroke="#e0e0e0" stroke-width="1"/><ellipse cx="115.8" cy="134" rx="86" ry="73" fill="none" stroke="#222274" stroke-width="2"/><ellipse cx="116" cy="133.5" rx="73.7" ry="62.4" fill="none" stroke="#b04430" stroke-width="1"/></g><g clip-path="url(#cin)" opacity="0.45"><ellipse cx="115.9" cy="136.2" rx="97.1" ry="79.3" fill="none" stroke="#e8e8e8" stroke-width="1"/><ellipse cx="115.8" cy="134" rx="86" ry="73" fill="none" stroke="#3a3ac0" stroke-width="1.3"/><ellipse cx="116" cy="133.5" rx="73.7" ry="62.4" fill="none" stroke="#e06050" stroke-width="1"/></g></svg>
<svg class="a" style="left:435px;top:459px;" width="9" height="9" viewBox="0 0 9 9"><rect x="0.5" y="0.5" width="8" height="8" fill="#f4f4f4" stroke="#555" stroke-width="0.8"/><path d="M2 4.5 L3.8 6.5 L7 2.2" stroke="#111" stroke-width="1.3" fill="none"/></svg>
<div class="a t" style="left:446px;top:453.8px;font-size:8.29px;color:#222;transform:scaleX(0.893);transform-origin:0 50%;">Preview</div>
<div class="a t" style="left:34px;top:495.0px;font-size:8.29px;color:#222;transform:scaleX(0.893);transform-origin:0 50%;">Имя файла:</div>
<div class="a" style="left:91px;top:497px;width:496px;height:15px;background:#dad1cc;border-top:1px solid #756a63;border-left:1px solid #756a63;border-right:1px solid #d6cfc8;border-bottom:1px solid #d6cfc8;box-shadow:inset 1px 1px #3a332e;box-sizing:border-box;"></div>
<div class="a t" style="left:94px;top:494.8px;font-size:8.29px;color:#111;transform:scaleX(0.893);transform-origin:0 50%;">Test-1.ai</div>
<div class="a t" style="left:34px;top:514.0999999999999px;font-size:8.29px;color:#222;transform:scaleX(0.893);transform-origin:0 50%;">Тип файлов:</div>
<div class="a" style="left:91px;top:515.5px;width:496px;height:15px;background:#dad1cc;border-top:1px solid #756a63;border-left:1px solid #756a63;border-right:1px solid #d6cfc8;border-bottom:1px solid #d6cfc8;box-shadow:inset 1px 1px #3a332e;box-sizing:border-box;"></div>
<div class="a t" style="left:94px;top:513.3px;font-size:8.29px;color:#111;transform:scaleX(0.893);transform-origin:0 50%;">Supported Files1</div>
<div class="a" style="left:577px;top:517px;width:9px;height:12px;background:#a89b93;border-top:1px solid #d6cfc8;border-left:1px solid #d6cfc8;border-right:1px solid #3a332e;border-bottom:1px solid #3a332e;box-shadow:inset -1px -1px #756a63;box-sizing:border-box;"></div>
<svg class="a" style="left:577px;top:517px;" width="9" height="12" viewBox="0 0 9 12"><path d="M2.5 5 H6.5 L4.5 7.5 Z" fill="#111"/></svg>
<div class="a" style="left:608px;top:497px;width:64px;height:16px;background:#3a332e"></div>
<div class="a" style="left:609px;top:498px;width:62px;height:14px;background:#a89b93;border-top:1px solid #d6cfc8;border-left:1px solid #d6cfc8;border-right:1px solid #3a332e;border-bottom:1px solid #3a332e;box-shadow:inset -1px -1px #756a63;box-sizing:border-box;"></div>
<svg class="a" style="left:612px;top:500px;" width="14" height="11" viewBox="0 0 14 11"><path d="M1 1 H5 L6 2 H10 V10 H1 Z" fill="#c8c060" stroke="#505010" stroke-width="0.7"/><path d="M3 5 H13 L10 10 H1 Z" fill="#a8b050" stroke="#505010" stroke-width="0.7"/><path d="M10 0.5 A3 3 0 0 1 13 3" stroke="#222" fill="none" stroke-width="0.8"/></svg>
<div class="a t" style="left:620px;top:495.3px;font-size:8.29px;color:#111;width:58.24px;text-align:center;transform:scaleX(0.893);transform-origin:0 50%;">Open</div>
<div class="a" style="left:608px;top:516px;width:64px;height:15px;background:#a89b93;border-top:1px solid #d6cfc8;border-left:1px solid #d6cfc8;border-right:1px solid #3a332e;border-bottom:1px solid #3a332e;box-shadow:inset -1px -1px #756a63;box-sizing:border-box;"></div>
<div class="a t" style="left:608px;top:513.8px;font-size:8.29px;color:#111;width:71.68px;text-align:center;transform:scaleX(0.893);transform-origin:0 50%;">Отмена</div>
<svg class="a" style="left:668px;top:527px;" width="8" height="8" viewBox="0 0 8 8"><path d="M7 1 L1 7 M7 4 L4 7" stroke="#d8d0c8" stroke-width="0.8"/><path d="M7 2 L2 7 M7 5 L5 7" stroke="#6a5f58" stroke-width="0.8"/></svg>
<svg class="a" style="left:357px;top:206.3px;" width="11" height="16" viewBox="0 0 11 16"><path d="M0.8 0.8 V12 L3.6 9.2 L5.6 13.6 L7.4 12.8 L5.4 8.4 H9.2 Z" fill="#fff" stroke="#111" stroke-width="0.9"/></svg>
</body></html>
